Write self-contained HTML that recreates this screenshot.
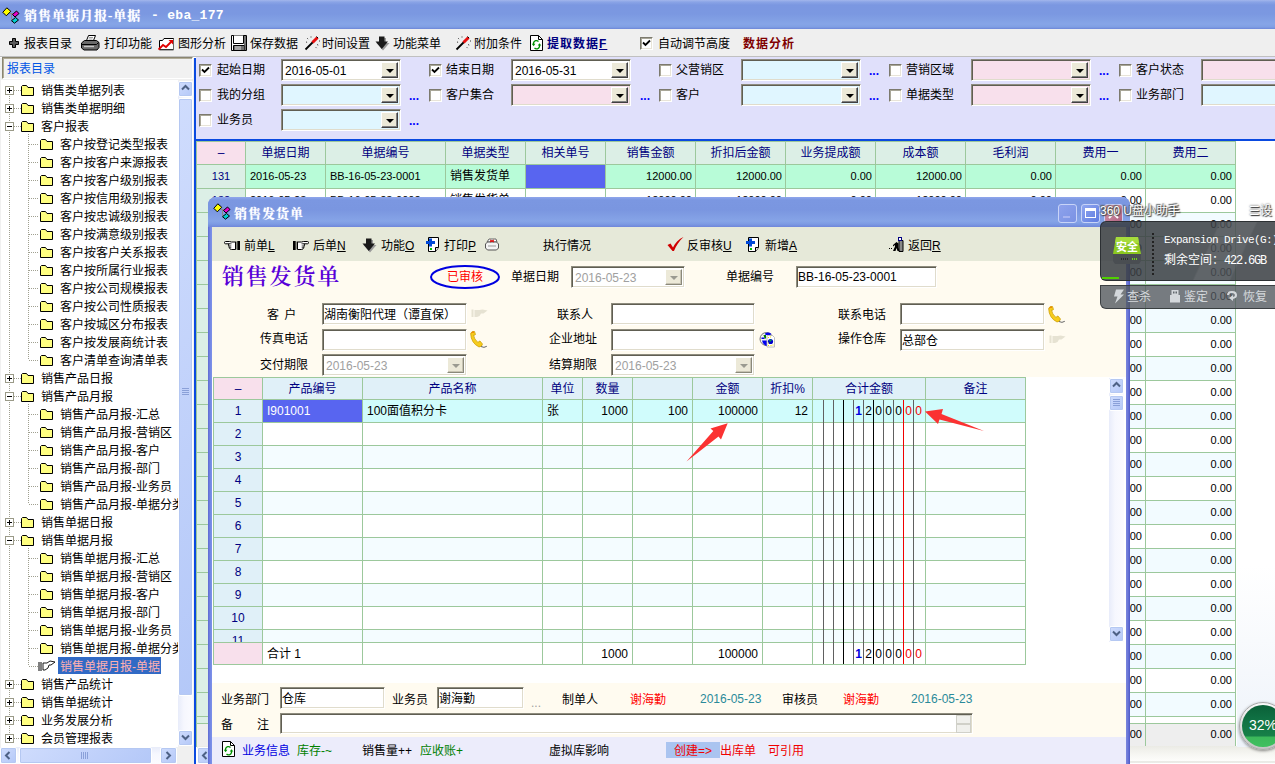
<!DOCTYPE html><html><head><meta charset="utf-8"><title>销售单据月报-单据</title><style>
*{box-sizing:border-box;margin:0;padding:0}
html,body{width:1275px;height:764px;overflow:hidden;background:#fff}
body{position:relative;font-family:"Liberation Sans","Noto Sans CJK SC",sans-serif;font-size:12px;color:#000;line-height:1}
.a{position:absolute}
.t{position:absolute;white-space:nowrap;line-height:14px;height:14px;font-size:12px}
.cb{position:absolute;width:13px;height:13px;background:#fff;border:1px solid #7c7a6e;border-right-color:#fff;border-bottom-color:#fff;box-shadow:inset 1px 1px 0 #a8a698, inset -1px -1px 0 #e8e4d8}
.combo{position:absolute;height:22px;border:1px solid #8e8c7e;border-right-color:#fff;border-bottom-color:#fff;box-shadow:inset 1px 1px 0 #605e52,inset -1px -1px 0 #e0dccc}
.combo .btn{position:absolute;right:2px;top:2px;bottom:2px;width:17px;background:#ece9d8;border:1px solid #fff;border-right-color:#404040;border-bottom-color:#404040;box-shadow:inset -1px -1px 0 #808080}
.combo .btn:after{content:"";position:absolute;left:4px;top:6px;border:4px solid transparent;border-top:4px solid #000;border-bottom:none}
.combo .btn.dis{border-right-color:#8a887a;border-bottom-color:#8a887a;box-shadow:inset -1px -1px 0 #c8c4b4}
.combo .btn.dis:after{border-top-color:#9a9a90}
.combo .v{position:absolute;left:3px;top:4px;font-size:12px;line-height:14px}
.inp{position:absolute;border:1px solid #8e8c7e;border-right-color:#fff;border-bottom-color:#fff;box-shadow:inset 1px 1px 0 #605e52,inset -1px -1px 0 #e0dccc;background:#fff}
.inp .v{position:absolute;left:1px;top:3px;font-size:12px;line-height:14px;white-space:nowrap}
.dots{position:absolute;color:#0000ff;font-weight:bold;font-size:12px;line-height:14px;letter-spacing:0px}
.gc{position:absolute;border-right:1px solid #9cc89c;border-bottom:1px solid #9cc89c;font-size:12px;line-height:14px;white-space:nowrap;overflow:hidden}
.sbb{position:absolute;background:linear-gradient(135deg,#cfdcfd,#b4c8f8);border:1px solid #fff;border-radius:2px;box-shadow:0 0 0 1px #b5c8f2 inset}
</style></head><body>
<div class="a" style="left:0px;top:0px;width:1275px;height:29px;background:linear-gradient(#a3b6ec 0,#8aa4e6 2px,#7b97e1 5px,#7b98e1 14px,#86a5e7 24px,#809fe4 27px,#6d86d8 29px)"></div>
<svg class="a" style="left:2px;top:7px" width="18" height="18" viewBox="0 0 18 18"><path d="M7.500 6.500h3.500M9.500 6.500v6h2" fill="none" stroke="#8a8a8a" stroke-width="1"/><path d="M4.800 0.800L8.800 4.300 4.300 8.800 0.800 5.300z" fill="#ffff00" stroke="#000" stroke-width="1"/><path d="M14.500 4L17 6.500 13 10 10.500 7.500z" fill="#e800c8" stroke="#000" stroke-width="1"/><path d="M13.500 10.500L16.500 13 12.500 16.200 9.500 13.700z" fill="#00d0d0" stroke="#000" stroke-width="1"/></svg>
<div class="t" style="left:24px;top:8px;color:#fff;font-family:'Liberation Serif','Noto Serif CJK SC',serif;font-weight:bold;font-size:13px;letter-spacing:1px;line-height:16px;height:16px;text-shadow:0 0 1px #dfe6ff">销售单据月报-单据</div>
<div class="t" style="left:151px;top:8px;color:#fff;font-weight:bold;font-size:13px;letter-spacing:0.3px;line-height:16px;height:16px;font-family:'Liberation Mono',monospace">- eba_177</div>
<div class="a" style="left:0px;top:29px;width:1275px;height:27px;background:#efefef"></div>
<div class="a" style="left:0px;top:56px;width:1275px;height:1px;background:#c0c0c0"></div>
<svg class="a" style="left:9px;top:38px" width="10" height="10" viewBox="0 0 10 10"><path d="M3.500 0.500h3v3h3v3h-3v3h-3v-3h-3v-3h3z" fill="#5a5a5a" stroke="#000" stroke-width="1"/></svg>
<div class="t" style="left:24px;top:37px;">报表目录</div>
<svg class="a" style="left:81px;top:35px" width="19" height="16" viewBox="0 0 19 16"><path d="M7.500 0.500h7l-2 5h-7z" fill="#fff" stroke="#000"/><path d="M8 2.500h4M7.500 4h4" stroke="#888" stroke-width="0.800"/><path d="M3.500 5.500h12l2.500 2v5l-2 2.500h-13l-2.500-2v-5z" fill="#6a6a6a" stroke="#000"/><path d="M1 9.500h14.500l2-2" fill="none" stroke="#000"/><path d="M3 11.500h10" stroke="#c8c8c8" stroke-width="1.400"/></svg>
<div class="t" style="left:104px;top:37px;">打印功能</div>
<svg class="a" style="left:158px;top:36px" width="17" height="15" viewBox="0 0 17 15"><path d="M1.500 4.500h3l1.500-2h9.500v11h-14z" fill="#fff" stroke="#000"/><path d="M15.500 3v11h-14" fill="none" stroke="#666" stroke-width="1"/><path d="M0.500 13.500l4.500-4.500 3 2 5-5" fill="none" stroke="#e00000" stroke-width="1.800"/><path d="M10.500 4h4.500v4.500z" fill="#e00000"/></svg>
<div class="t" style="left:178px;top:37px;">图形分析</div>
<svg class="a" style="left:231px;top:35px" width="16" height="16" viewBox="0 0 16 16"><path d="M0.500 0.500h15v15h-15z" fill="#fff" stroke="#000"/><path d="M2.500 0.500v8h10v-8" fill="#fff" stroke="#000"/><path d="M2.500 10.500h11v5h-11z" fill="#707070" stroke="#000"/><path d="M5 11v4M7 11v4M9 11v4" stroke="#ddd" stroke-width="1"/><path d="M14 1v14" stroke="#444" stroke-width="1.500"/></svg>
<div class="t" style="left:250px;top:37px;">保存数据</div>
<svg class="a" style="left:304px;top:35px" width="17" height="16" viewBox="0 0 17 16"><path d="M1.500 14.500l8-8" stroke="#000" stroke-width="1.800" fill="none"/><path d="M8.500 7.500l5-5" stroke="#e81010" stroke-width="3"/><path d="M12.500 1.500l1.500 1.500" stroke="#000" stroke-width="1"/><path d="M3 3l1.500 1.500M7 1.500v2M13 9.500l2 1M11.500 12l1.500 1.500M2 7l2 0.500M15 6l1 0" stroke="#303030" stroke-width="1" stroke-dasharray="1 1"/></svg>
<div class="t" style="left:322px;top:37px;">时间设置</div>
<svg class="a" style="left:375px;top:36px" width="15" height="15" viewBox="0 0 15 15"><path d="M5 2h6v5h3.500l-6.500 7.500-6.500-7.500h3.500z" fill="#9a9a9a"/><path d="M4 0.500h5.500v5h3.500l-6.200 7.500-6.300-7.500h3.500z" fill="#1a1a1a"/></svg>
<div class="t" style="left:393px;top:37px;">功能菜单</div>
<svg class="a" style="left:455px;top:35px" width="17" height="16" viewBox="0 0 17 16"><path d="M1.500 14.500l8-8" stroke="#000" stroke-width="1.800" fill="none"/><path d="M8.500 7.500l5-5" stroke="#e81010" stroke-width="3"/><path d="M12.500 1.500l1.500 1.500" stroke="#000" stroke-width="1"/><path d="M3 3l1.500 1.500M7 1.500v2M13 9.500l2 1M11.500 12l1.500 1.500M2 7l2 0.500M15 6l1 0" stroke="#303030" stroke-width="1" stroke-dasharray="1 1"/></svg>
<div class="t" style="left:474px;top:37px;">附加条件</div>
<svg class="a" style="left:529px;top:34px" width="15" height="18" viewBox="0 0 15 18"><path d="M1.500 1.500h8l4 4v11h-12z" fill="#fff" stroke="#000"/><path d="M9.500 1.500v4h4" fill="none" stroke="#000"/><path d="M9.500 7.500A3 3.200 0 0 0 4.500 9v1.500" fill="none" stroke="#009000" stroke-width="1.300"/><path d="M2.800 9.800h3.600l-1.800 2.400z" fill="#009000"/><path d="M5.500 14A3 3.200 0 0 0 10.500 12.500v-1.500" fill="none" stroke="#009000" stroke-width="1.300"/><path d="M8.700 11.600h3.600l-1.800-2.400z" fill="#009000"/></svg>
<div class="t" style="left:547px;top:37px;font-weight:bold;color:#000080;letter-spacing:1px">提取数据<u>F</u></div>
<div class="cb" style="left:640px;top:37px;width:13px;height:13px;"></div>
<svg class="a" style="left:642px;top:39px" width="9" height="9" viewBox="0 0 9 9"><path d="M1 3.500l2.500 2.500 4.500-4.500" fill="none" stroke="#000" stroke-width="1.800"/></svg>
<div class="t" style="left:658px;top:37px;">自动调节高度</div>
<div class="t" style="left:743px;top:37px;font-weight:bold;color:#800000;letter-spacing:1px">数据分析</div>
<div class="a" style="left:0px;top:58px;width:194px;height:706px;background:#f0f0f0"></div>
<div class="a" style="left:2px;top:57px;width:191px;height:22px;background:#f1f1f1;border:1px solid #8a8570;border-right-color:#fff;border-bottom-color:#fff;box-shadow:inset 1px 1px 0 #b0ab98"></div>
<div class="t" style="left:7px;top:62px;color:#0055e5">报表目录</div>
<div class="a" style="left:1px;top:80px;width:177px;height:667px;background:#fff"></div>
<div class="a" style="left:9px;top:94px;width:1px;height:643px;background-image:linear-gradient(#a0a090 50%,transparent 50%);background-size:1px 2px"></div>
<div class="a" style="left:28px;top:134px;width:1px;height:226px;background-image:linear-gradient(#a0a090 50%,transparent 50%);background-size:1px 2px"></div>
<div class="a" style="left:28px;top:404px;width:1px;height:100px;background-image:linear-gradient(#a0a090 50%,transparent 50%);background-size:1px 2px"></div>
<div class="a" style="left:28px;top:548px;width:1px;height:118px;background-image:linear-gradient(#a0a090 50%,transparent 50%);background-size:1px 2px"></div>
<div class="a" style="left:0;top:80px;width:178px;height:667px;overflow:hidden">
<div class="a" style="left:14px;top:10px;width:7px;height:1px;background-image:linear-gradient(90deg,#a0a090 50%,transparent 50%);background-size:2px 1px"></div>
<svg class="a" style="left:5px;top:6px" width="9" height="9" viewBox="0 0 9 9"><rect x="0.500" y="0.500" width="8" height="8" fill="#fff" stroke="#9a9a88"/><path d="M2 4.500h5M4.500 2v5" stroke="#000" stroke-width="1"/></svg>
<svg class="a" style="left:21px;top:4px" width="13" height="12" viewBox="0 0 13 12"><path d="M0.500 2.500v9h12v-8h-5.500l-1.500-2h-4z" fill="#ffff80" stroke="#000" stroke-width="1"/></svg>
<div class="t" style="left:41px;top:4px;">销售类单据列表</div>
<div class="a" style="left:14px;top:28px;width:7px;height:1px;background-image:linear-gradient(90deg,#a0a090 50%,transparent 50%);background-size:2px 1px"></div>
<svg class="a" style="left:5px;top:24px" width="9" height="9" viewBox="0 0 9 9"><rect x="0.500" y="0.500" width="8" height="8" fill="#fff" stroke="#9a9a88"/><path d="M2 4.500h5M4.500 2v5" stroke="#000" stroke-width="1"/></svg>
<svg class="a" style="left:21px;top:22px" width="13" height="12" viewBox="0 0 13 12"><path d="M0.500 2.500v9h12v-8h-5.500l-1.500-2h-4z" fill="#ffff80" stroke="#000" stroke-width="1"/></svg>
<div class="t" style="left:41px;top:22px;">销售类单据明细</div>
<div class="a" style="left:14px;top:46px;width:7px;height:1px;background-image:linear-gradient(90deg,#a0a090 50%,transparent 50%);background-size:2px 1px"></div>
<svg class="a" style="left:5px;top:42px" width="9" height="9" viewBox="0 0 9 9"><rect x="0.500" y="0.500" width="8" height="8" fill="#fff" stroke="#9a9a88"/><path d="M2 4.500h5" stroke="#000" stroke-width="1"/></svg>
<svg class="a" style="left:21px;top:40px" width="13" height="12" viewBox="0 0 13 12"><path d="M0.500 2.500v9h12v-8h-5.500l-1.500-2h-4z" fill="#ffff80" stroke="#000" stroke-width="1"/></svg>
<div class="t" style="left:41px;top:40px;">客户报表</div>
<div class="a" style="left:29px;top:64px;width:10px;height:1px;background-image:linear-gradient(90deg,#a0a090 50%,transparent 50%);background-size:2px 1px"></div>
<svg class="a" style="left:40px;top:58px" width="13" height="12" viewBox="0 0 13 12"><path d="M0.500 2.500v9h12v-8h-5.500l-1.500-2h-4z" fill="#ffff80" stroke="#000" stroke-width="1"/></svg>
<div class="t" style="left:60px;top:58px;">客户按登记类型报表</div>
<div class="a" style="left:29px;top:82px;width:10px;height:1px;background-image:linear-gradient(90deg,#a0a090 50%,transparent 50%);background-size:2px 1px"></div>
<svg class="a" style="left:40px;top:76px" width="13" height="12" viewBox="0 0 13 12"><path d="M0.500 2.500v9h12v-8h-5.500l-1.500-2h-4z" fill="#ffff80" stroke="#000" stroke-width="1"/></svg>
<div class="t" style="left:60px;top:76px;">客户按客户来源报表</div>
<div class="a" style="left:29px;top:100px;width:10px;height:1px;background-image:linear-gradient(90deg,#a0a090 50%,transparent 50%);background-size:2px 1px"></div>
<svg class="a" style="left:40px;top:94px" width="13" height="12" viewBox="0 0 13 12"><path d="M0.500 2.500v9h12v-8h-5.500l-1.500-2h-4z" fill="#ffff80" stroke="#000" stroke-width="1"/></svg>
<div class="t" style="left:60px;top:94px;">客户按客户级别报表</div>
<div class="a" style="left:29px;top:118px;width:10px;height:1px;background-image:linear-gradient(90deg,#a0a090 50%,transparent 50%);background-size:2px 1px"></div>
<svg class="a" style="left:40px;top:112px" width="13" height="12" viewBox="0 0 13 12"><path d="M0.500 2.500v9h12v-8h-5.500l-1.500-2h-4z" fill="#ffff80" stroke="#000" stroke-width="1"/></svg>
<div class="t" style="left:60px;top:112px;">客户按信用级别报表</div>
<div class="a" style="left:29px;top:136px;width:10px;height:1px;background-image:linear-gradient(90deg,#a0a090 50%,transparent 50%);background-size:2px 1px"></div>
<svg class="a" style="left:40px;top:130px" width="13" height="12" viewBox="0 0 13 12"><path d="M0.500 2.500v9h12v-8h-5.500l-1.500-2h-4z" fill="#ffff80" stroke="#000" stroke-width="1"/></svg>
<div class="t" style="left:60px;top:130px;">客户按忠诚级别报表</div>
<div class="a" style="left:29px;top:154px;width:10px;height:1px;background-image:linear-gradient(90deg,#a0a090 50%,transparent 50%);background-size:2px 1px"></div>
<svg class="a" style="left:40px;top:148px" width="13" height="12" viewBox="0 0 13 12"><path d="M0.500 2.500v9h12v-8h-5.500l-1.500-2h-4z" fill="#ffff80" stroke="#000" stroke-width="1"/></svg>
<div class="t" style="left:60px;top:148px;">客户按满意级别报表</div>
<div class="a" style="left:29px;top:172px;width:10px;height:1px;background-image:linear-gradient(90deg,#a0a090 50%,transparent 50%);background-size:2px 1px"></div>
<svg class="a" style="left:40px;top:166px" width="13" height="12" viewBox="0 0 13 12"><path d="M0.500 2.500v9h12v-8h-5.500l-1.500-2h-4z" fill="#ffff80" stroke="#000" stroke-width="1"/></svg>
<div class="t" style="left:60px;top:166px;">客户按客户关系报表</div>
<div class="a" style="left:29px;top:190px;width:10px;height:1px;background-image:linear-gradient(90deg,#a0a090 50%,transparent 50%);background-size:2px 1px"></div>
<svg class="a" style="left:40px;top:184px" width="13" height="12" viewBox="0 0 13 12"><path d="M0.500 2.500v9h12v-8h-5.500l-1.500-2h-4z" fill="#ffff80" stroke="#000" stroke-width="1"/></svg>
<div class="t" style="left:60px;top:184px;">客户按所属行业报表</div>
<div class="a" style="left:29px;top:208px;width:10px;height:1px;background-image:linear-gradient(90deg,#a0a090 50%,transparent 50%);background-size:2px 1px"></div>
<svg class="a" style="left:40px;top:202px" width="13" height="12" viewBox="0 0 13 12"><path d="M0.500 2.500v9h12v-8h-5.500l-1.500-2h-4z" fill="#ffff80" stroke="#000" stroke-width="1"/></svg>
<div class="t" style="left:60px;top:202px;">客户按公司规模报表</div>
<div class="a" style="left:29px;top:226px;width:10px;height:1px;background-image:linear-gradient(90deg,#a0a090 50%,transparent 50%);background-size:2px 1px"></div>
<svg class="a" style="left:40px;top:220px" width="13" height="12" viewBox="0 0 13 12"><path d="M0.500 2.500v9h12v-8h-5.500l-1.500-2h-4z" fill="#ffff80" stroke="#000" stroke-width="1"/></svg>
<div class="t" style="left:60px;top:220px;">客户按公司性质报表</div>
<div class="a" style="left:29px;top:244px;width:10px;height:1px;background-image:linear-gradient(90deg,#a0a090 50%,transparent 50%);background-size:2px 1px"></div>
<svg class="a" style="left:40px;top:238px" width="13" height="12" viewBox="0 0 13 12"><path d="M0.500 2.500v9h12v-8h-5.500l-1.500-2h-4z" fill="#ffff80" stroke="#000" stroke-width="1"/></svg>
<div class="t" style="left:60px;top:238px;">客户按城区分布报表</div>
<div class="a" style="left:29px;top:262px;width:10px;height:1px;background-image:linear-gradient(90deg,#a0a090 50%,transparent 50%);background-size:2px 1px"></div>
<svg class="a" style="left:40px;top:256px" width="13" height="12" viewBox="0 0 13 12"><path d="M0.500 2.500v9h12v-8h-5.500l-1.500-2h-4z" fill="#ffff80" stroke="#000" stroke-width="1"/></svg>
<div class="t" style="left:60px;top:256px;">客户按发展商统计表</div>
<div class="a" style="left:29px;top:280px;width:10px;height:1px;background-image:linear-gradient(90deg,#a0a090 50%,transparent 50%);background-size:2px 1px"></div>
<svg class="a" style="left:40px;top:274px" width="13" height="12" viewBox="0 0 13 12"><path d="M0.500 2.500v9h12v-8h-5.500l-1.500-2h-4z" fill="#ffff80" stroke="#000" stroke-width="1"/></svg>
<div class="t" style="left:60px;top:274px;">客户清单查询清单表</div>
<div class="a" style="left:14px;top:298px;width:7px;height:1px;background-image:linear-gradient(90deg,#a0a090 50%,transparent 50%);background-size:2px 1px"></div>
<svg class="a" style="left:5px;top:294px" width="9" height="9" viewBox="0 0 9 9"><rect x="0.500" y="0.500" width="8" height="8" fill="#fff" stroke="#9a9a88"/><path d="M2 4.500h5M4.500 2v5" stroke="#000" stroke-width="1"/></svg>
<svg class="a" style="left:21px;top:292px" width="13" height="12" viewBox="0 0 13 12"><path d="M0.500 2.500v9h12v-8h-5.500l-1.500-2h-4z" fill="#ffff80" stroke="#000" stroke-width="1"/></svg>
<div class="t" style="left:41px;top:292px;">销售产品日报</div>
<div class="a" style="left:14px;top:316px;width:7px;height:1px;background-image:linear-gradient(90deg,#a0a090 50%,transparent 50%);background-size:2px 1px"></div>
<svg class="a" style="left:5px;top:312px" width="9" height="9" viewBox="0 0 9 9"><rect x="0.500" y="0.500" width="8" height="8" fill="#fff" stroke="#9a9a88"/><path d="M2 4.500h5" stroke="#000" stroke-width="1"/></svg>
<svg class="a" style="left:21px;top:310px" width="13" height="12" viewBox="0 0 13 12"><path d="M0.500 2.500v9h12v-8h-5.500l-1.500-2h-4z" fill="#ffff80" stroke="#000" stroke-width="1"/></svg>
<div class="t" style="left:41px;top:310px;">销售产品月报</div>
<div class="a" style="left:29px;top:334px;width:10px;height:1px;background-image:linear-gradient(90deg,#a0a090 50%,transparent 50%);background-size:2px 1px"></div>
<svg class="a" style="left:40px;top:328px" width="13" height="12" viewBox="0 0 13 12"><path d="M0.500 2.500v9h12v-8h-5.500l-1.500-2h-4z" fill="#ffff80" stroke="#000" stroke-width="1"/></svg>
<div class="t" style="left:60px;top:328px;">销售产品月报-汇总</div>
<div class="a" style="left:29px;top:352px;width:10px;height:1px;background-image:linear-gradient(90deg,#a0a090 50%,transparent 50%);background-size:2px 1px"></div>
<svg class="a" style="left:40px;top:346px" width="13" height="12" viewBox="0 0 13 12"><path d="M0.500 2.500v9h12v-8h-5.500l-1.500-2h-4z" fill="#ffff80" stroke="#000" stroke-width="1"/></svg>
<div class="t" style="left:60px;top:346px;">销售产品月报-营销区</div>
<div class="a" style="left:29px;top:370px;width:10px;height:1px;background-image:linear-gradient(90deg,#a0a090 50%,transparent 50%);background-size:2px 1px"></div>
<svg class="a" style="left:40px;top:364px" width="13" height="12" viewBox="0 0 13 12"><path d="M0.500 2.500v9h12v-8h-5.500l-1.500-2h-4z" fill="#ffff80" stroke="#000" stroke-width="1"/></svg>
<div class="t" style="left:60px;top:364px;">销售产品月报-客户</div>
<div class="a" style="left:29px;top:388px;width:10px;height:1px;background-image:linear-gradient(90deg,#a0a090 50%,transparent 50%);background-size:2px 1px"></div>
<svg class="a" style="left:40px;top:382px" width="13" height="12" viewBox="0 0 13 12"><path d="M0.500 2.500v9h12v-8h-5.500l-1.500-2h-4z" fill="#ffff80" stroke="#000" stroke-width="1"/></svg>
<div class="t" style="left:60px;top:382px;">销售产品月报-部门</div>
<div class="a" style="left:29px;top:406px;width:10px;height:1px;background-image:linear-gradient(90deg,#a0a090 50%,transparent 50%);background-size:2px 1px"></div>
<svg class="a" style="left:40px;top:400px" width="13" height="12" viewBox="0 0 13 12"><path d="M0.500 2.500v9h12v-8h-5.500l-1.500-2h-4z" fill="#ffff80" stroke="#000" stroke-width="1"/></svg>
<div class="t" style="left:60px;top:400px;">销售产品月报-业务员</div>
<div class="a" style="left:29px;top:424px;width:10px;height:1px;background-image:linear-gradient(90deg,#a0a090 50%,transparent 50%);background-size:2px 1px"></div>
<svg class="a" style="left:40px;top:418px" width="13" height="12" viewBox="0 0 13 12"><path d="M0.500 2.500v9h12v-8h-5.500l-1.500-2h-4z" fill="#ffff80" stroke="#000" stroke-width="1"/></svg>
<div class="t" style="left:60px;top:418px;">销售产品月报-单据分类</div>
<div class="a" style="left:14px;top:442px;width:7px;height:1px;background-image:linear-gradient(90deg,#a0a090 50%,transparent 50%);background-size:2px 1px"></div>
<svg class="a" style="left:5px;top:438px" width="9" height="9" viewBox="0 0 9 9"><rect x="0.500" y="0.500" width="8" height="8" fill="#fff" stroke="#9a9a88"/><path d="M2 4.500h5M4.500 2v5" stroke="#000" stroke-width="1"/></svg>
<svg class="a" style="left:21px;top:436px" width="13" height="12" viewBox="0 0 13 12"><path d="M0.500 2.500v9h12v-8h-5.500l-1.500-2h-4z" fill="#ffff80" stroke="#000" stroke-width="1"/></svg>
<div class="t" style="left:41px;top:436px;">销售单据日报</div>
<div class="a" style="left:14px;top:460px;width:7px;height:1px;background-image:linear-gradient(90deg,#a0a090 50%,transparent 50%);background-size:2px 1px"></div>
<svg class="a" style="left:5px;top:456px" width="9" height="9" viewBox="0 0 9 9"><rect x="0.500" y="0.500" width="8" height="8" fill="#fff" stroke="#9a9a88"/><path d="M2 4.500h5" stroke="#000" stroke-width="1"/></svg>
<svg class="a" style="left:21px;top:454px" width="13" height="12" viewBox="0 0 13 12"><path d="M0.500 2.500v9h12v-8h-5.500l-1.500-2h-4z" fill="#ffff80" stroke="#000" stroke-width="1"/></svg>
<div class="t" style="left:41px;top:454px;">销售单据月报</div>
<div class="a" style="left:29px;top:478px;width:10px;height:1px;background-image:linear-gradient(90deg,#a0a090 50%,transparent 50%);background-size:2px 1px"></div>
<svg class="a" style="left:40px;top:472px" width="13" height="12" viewBox="0 0 13 12"><path d="M0.500 2.500v9h12v-8h-5.500l-1.500-2h-4z" fill="#ffff80" stroke="#000" stroke-width="1"/></svg>
<div class="t" style="left:60px;top:472px;">销售单据月报-汇总</div>
<div class="a" style="left:29px;top:496px;width:10px;height:1px;background-image:linear-gradient(90deg,#a0a090 50%,transparent 50%);background-size:2px 1px"></div>
<svg class="a" style="left:40px;top:490px" width="13" height="12" viewBox="0 0 13 12"><path d="M0.500 2.500v9h12v-8h-5.500l-1.500-2h-4z" fill="#ffff80" stroke="#000" stroke-width="1"/></svg>
<div class="t" style="left:60px;top:490px;">销售单据月报-营销区</div>
<div class="a" style="left:29px;top:514px;width:10px;height:1px;background-image:linear-gradient(90deg,#a0a090 50%,transparent 50%);background-size:2px 1px"></div>
<svg class="a" style="left:40px;top:508px" width="13" height="12" viewBox="0 0 13 12"><path d="M0.500 2.500v9h12v-8h-5.500l-1.500-2h-4z" fill="#ffff80" stroke="#000" stroke-width="1"/></svg>
<div class="t" style="left:60px;top:508px;">销售单据月报-客户</div>
<div class="a" style="left:29px;top:532px;width:10px;height:1px;background-image:linear-gradient(90deg,#a0a090 50%,transparent 50%);background-size:2px 1px"></div>
<svg class="a" style="left:40px;top:526px" width="13" height="12" viewBox="0 0 13 12"><path d="M0.500 2.500v9h12v-8h-5.500l-1.500-2h-4z" fill="#ffff80" stroke="#000" stroke-width="1"/></svg>
<div class="t" style="left:60px;top:526px;">销售单据月报-部门</div>
<div class="a" style="left:29px;top:550px;width:10px;height:1px;background-image:linear-gradient(90deg,#a0a090 50%,transparent 50%);background-size:2px 1px"></div>
<svg class="a" style="left:40px;top:544px" width="13" height="12" viewBox="0 0 13 12"><path d="M0.500 2.500v9h12v-8h-5.500l-1.500-2h-4z" fill="#ffff80" stroke="#000" stroke-width="1"/></svg>
<div class="t" style="left:60px;top:544px;">销售单据月报-业务员</div>
<div class="a" style="left:29px;top:568px;width:10px;height:1px;background-image:linear-gradient(90deg,#a0a090 50%,transparent 50%);background-size:2px 1px"></div>
<svg class="a" style="left:40px;top:562px" width="13" height="12" viewBox="0 0 13 12"><path d="M0.500 2.500v9h12v-8h-5.500l-1.500-2h-4z" fill="#ffff80" stroke="#000" stroke-width="1"/></svg>
<div class="t" style="left:60px;top:562px;">销售单据月报-单据分类</div>
<div class="a" style="left:29px;top:586px;width:10px;height:1px;background-image:linear-gradient(90deg,#a0a090 50%,transparent 50%);background-size:2px 1px"></div>
<svg class="a" style="left:38px;top:580px" width="18" height="12" viewBox="0 0 18 12"><path d="M1 2v9M3 2v9" stroke="#000" stroke-width="1"/><path d="M5 3h4l3-2 5 1-4 3h-2l-1 3-3 2H5z" fill="#fff" stroke="#000" stroke-width="0.900"/></svg>
<div class="a" style="left:58px;top:577px;width:103px;height:17px;background:#316ac5"></div>
<div class="t" style="left:60px;top:580px;color:#ffb0b0">销售单据月报-单据</div>
<div class="a" style="left:14px;top:604px;width:7px;height:1px;background-image:linear-gradient(90deg,#a0a090 50%,transparent 50%);background-size:2px 1px"></div>
<svg class="a" style="left:5px;top:600px" width="9" height="9" viewBox="0 0 9 9"><rect x="0.500" y="0.500" width="8" height="8" fill="#fff" stroke="#9a9a88"/><path d="M2 4.500h5M4.500 2v5" stroke="#000" stroke-width="1"/></svg>
<svg class="a" style="left:21px;top:598px" width="13" height="12" viewBox="0 0 13 12"><path d="M0.500 2.500v9h12v-8h-5.500l-1.500-2h-4z" fill="#ffff80" stroke="#000" stroke-width="1"/></svg>
<div class="t" style="left:41px;top:598px;">销售产品统计</div>
<div class="a" style="left:14px;top:622px;width:7px;height:1px;background-image:linear-gradient(90deg,#a0a090 50%,transparent 50%);background-size:2px 1px"></div>
<svg class="a" style="left:5px;top:618px" width="9" height="9" viewBox="0 0 9 9"><rect x="0.500" y="0.500" width="8" height="8" fill="#fff" stroke="#9a9a88"/><path d="M2 4.500h5M4.500 2v5" stroke="#000" stroke-width="1"/></svg>
<svg class="a" style="left:21px;top:616px" width="13" height="12" viewBox="0 0 13 12"><path d="M0.500 2.500v9h12v-8h-5.500l-1.500-2h-4z" fill="#ffff80" stroke="#000" stroke-width="1"/></svg>
<div class="t" style="left:41px;top:616px;">销售单据统计</div>
<div class="a" style="left:14px;top:640px;width:7px;height:1px;background-image:linear-gradient(90deg,#a0a090 50%,transparent 50%);background-size:2px 1px"></div>
<svg class="a" style="left:5px;top:636px" width="9" height="9" viewBox="0 0 9 9"><rect x="0.500" y="0.500" width="8" height="8" fill="#fff" stroke="#9a9a88"/><path d="M2 4.500h5M4.500 2v5" stroke="#000" stroke-width="1"/></svg>
<svg class="a" style="left:21px;top:634px" width="13" height="12" viewBox="0 0 13 12"><path d="M0.500 2.500v9h12v-8h-5.500l-1.500-2h-4z" fill="#ffff80" stroke="#000" stroke-width="1"/></svg>
<div class="t" style="left:41px;top:634px;">业务发展分析</div>
<div class="a" style="left:14px;top:658px;width:7px;height:1px;background-image:linear-gradient(90deg,#a0a090 50%,transparent 50%);background-size:2px 1px"></div>
<svg class="a" style="left:5px;top:654px" width="9" height="9" viewBox="0 0 9 9"><rect x="0.500" y="0.500" width="8" height="8" fill="#fff" stroke="#9a9a88"/><path d="M2 4.500h5M4.500 2v5" stroke="#000" stroke-width="1"/></svg>
<svg class="a" style="left:21px;top:652px" width="13" height="12" viewBox="0 0 13 12"><path d="M0.500 2.500v9h12v-8h-5.500l-1.500-2h-4z" fill="#ffff80" stroke="#000" stroke-width="1"/></svg>
<div class="t" style="left:41px;top:652px;">会员管理报表</div>
</div>
<div class="a" style="left:178px;top:81px;width:15px;height:665px;background:linear-gradient(90deg,#e8ecfa,#f6f7fe 40%,#fbfbff)"></div>
<div class="sbb" style="left:178px;top:81px;width:15px;height:16px;"></div>
<svg class="a" style="left:181px;top:84px" width="9" height="9" viewBox="0 0 9 9"><path d="M1 5.500l3.500-3.500 3.500 3.500" fill="none" stroke="#4d6185" stroke-width="2"/></svg>
<div class="sbb" style="left:178px;top:730px;width:15px;height:16px;"></div>
<svg class="a" style="left:181px;top:734px" width="9" height="9" viewBox="0 0 9 9"><path d="M1 1.500l3.500 3.500 3.500-3.500" fill="none" stroke="#4d6185" stroke-width="2"/></svg>
<div class="sbb" style="left:178px;top:98px;width:15px;height:598px;"></div>
<div class="a" style="left:0px;top:747px;width:177px;height:17px;background:linear-gradient(#e8ecfa,#f6f7fe 40%,#fbfbff)"></div>
<div class="sbb" style="left:0px;top:747px;width:17px;height:17px;"></div>
<svg class="a" style="left:4px;top:751px" width="9" height="9" viewBox="0 0 9 9"><path d="M5.500 1l-3.500 3.500 3.500 3.500" fill="none" stroke="#4d6185" stroke-width="2"/></svg>
<div class="sbb" style="left:160px;top:747px;width:17px;height:17px;"></div>
<svg class="a" style="left:164px;top:751px" width="9" height="9" viewBox="0 0 9 9"><path d="M2.500 1l3.500 3.500-3.500 3.500" fill="none" stroke="#4d6185" stroke-width="2"/></svg>
<div class="sbb" style="left:19px;top:747px;width:133px;height:17px;"></div>
<div class="a" style="left:81px;top:752px;width:1px;height:7px;background:#8aa0d8"></div>
<div class="a" style="left:83px;top:752px;width:1px;height:7px;background:#8aa0d8"></div>
<div class="a" style="left:85px;top:752px;width:1px;height:7px;background:#8aa0d8"></div>
<div class="a" style="left:87px;top:752px;width:1px;height:7px;background:#8aa0d8"></div>
<div class="a" style="left:182px;top:388px;width:7px;height:1px;background:#8aa0d8"></div>
<div class="a" style="left:182px;top:390px;width:7px;height:1px;background:#8aa0d8"></div>
<div class="a" style="left:182px;top:392px;width:7px;height:1px;background:#8aa0d8"></div>
<div class="a" style="left:182px;top:394px;width:7px;height:1px;background:#8aa0d8"></div>
<div class="a" style="left:194px;top:58px;width:2px;height:706px;background:#0a4ae0"></div>
<div class="a" style="left:196px;top:57px;width:1079px;height:82px;background:#e0e0fb"></div>
<div class="a" style="left:196px;top:139px;width:1079px;height:2px;background:#0a4ae0"></div>
<div class="cb" style="left:199px;top:64px;width:13px;height:13px;"></div>
<svg class="a" style="left:201px;top:66px" width="9" height="9" viewBox="0 0 9 9"><path d="M1 3.500l2.500 2.500 4.500-4.500" fill="none" stroke="#000" stroke-width="1.800"/></svg>
<div class="t" style="left:217px;top:63px;">起始日期</div>
<div class="combo" style="left:281px;top:59px;width:120px;background:#fff"><div class="v" style="color:#000">2016-05-01</div><div class="btn"></div></div>
<div class="cb" style="left:429px;top:64px;width:13px;height:13px;"></div>
<svg class="a" style="left:431px;top:66px" width="9" height="9" viewBox="0 0 9 9"><path d="M1 3.500l2.500 2.500 4.500-4.500" fill="none" stroke="#000" stroke-width="1.800"/></svg>
<div class="t" style="left:446px;top:63px;">结束日期</div>
<div class="combo" style="left:511px;top:59px;width:120px;background:#fff"><div class="v" style="color:#000">2016-05-31</div><div class="btn"></div></div>
<div class="cb" style="left:659px;top:64px;width:13px;height:13px;"></div>
<div class="t" style="left:676px;top:63px;">父营销区</div>
<div class="combo" style="left:741px;top:59px;width:120px;background:#e0f6ff"><div class="v" style="color:#000"></div><div class="btn"></div></div>
<div class="dots" style="left:869px;top:64px;">...</div>
<div class="cb" style="left:889px;top:64px;width:13px;height:13px;"></div>
<div class="t" style="left:906px;top:63px;">营销区域</div>
<div class="combo" style="left:971px;top:59px;width:120px;background:#f8e0ec"><div class="v" style="color:#000"></div><div class="btn"></div></div>
<div class="dots" style="left:1099px;top:64px;">...</div>
<div class="cb" style="left:1119px;top:64px;width:13px;height:13px;"></div>
<div class="t" style="left:1136px;top:63px;">客户状态</div>
<div class="combo" style="left:1201px;top:59px;width:120px;background:#f8e0ec"><div class="v" style="color:#000"></div><div class="btn"></div></div>
<div class="dots" style="left:1330px;top:64px;">...</div>
<div class="cb" style="left:199px;top:89px;width:13px;height:13px;"></div>
<div class="t" style="left:217px;top:88px;">我的分组</div>
<div class="combo" style="left:281px;top:84px;width:120px;background:#e0f6ff"><div class="v" style="color:#000"></div><div class="btn"></div></div>
<div class="dots" style="left:409px;top:89px;">...</div>
<div class="cb" style="left:429px;top:89px;width:13px;height:13px;"></div>
<div class="t" style="left:446px;top:88px;">客户集合</div>
<div class="combo" style="left:511px;top:84px;width:120px;background:#f8e0ec"><div class="v" style="color:#000"></div><div class="btn"></div></div>
<div class="dots" style="left:640px;top:89px;">...</div>
<div class="cb" style="left:659px;top:89px;width:13px;height:13px;"></div>
<div class="t" style="left:676px;top:88px;">客户</div>
<div class="combo" style="left:741px;top:84px;width:120px;background:#e0f6ff"><div class="v" style="color:#000"></div><div class="btn"></div></div>
<div class="dots" style="left:869px;top:89px;">...</div>
<div class="cb" style="left:889px;top:89px;width:13px;height:13px;"></div>
<div class="t" style="left:906px;top:88px;">单据类型</div>
<div class="combo" style="left:971px;top:84px;width:120px;background:#f8e0ec"><div class="v" style="color:#000"></div><div class="btn"></div></div>
<div class="dots" style="left:1099px;top:89px;">...</div>
<div class="cb" style="left:1119px;top:89px;width:13px;height:13px;"></div>
<div class="t" style="left:1136px;top:88px;">业务部门</div>
<div class="combo" style="left:1201px;top:84px;width:120px;background:#e0f6ff"><div class="v" style="color:#000"></div><div class="btn"></div></div>
<div class="dots" style="left:1330px;top:89px;">...</div>
<div class="cb" style="left:199px;top:114px;width:13px;height:13px;"></div>
<div class="t" style="left:217px;top:113px;">业务员</div>
<div class="combo" style="left:281px;top:109px;width:120px;background:#e0f6ff"><div class="v" style="color:#000"></div><div class="btn"></div></div>
<div class="dots" style="left:409px;top:114px;">...</div>
<div class="a" style="left:196px;top:141px;width:1040px;height:606px;background:#fff;border-left:1px solid #9cc89c;border-top:1px solid #9cc89c"></div>
<div class="gc" style="left:197px;top:142px;width:49px;height:23px;background:#f8e0ec;text-align:center;color:#000080;padding-top:4px;">–</div>
<div class="gc" style="left:246px;top:142px;width:80px;height:23px;background:#dcefe6;text-align:center;color:#000080;padding-top:4px;">单据日期</div>
<div class="gc" style="left:326px;top:142px;width:120px;height:23px;background:#dcefe6;text-align:center;color:#000080;padding-top:4px;">单据编号</div>
<div class="gc" style="left:446px;top:142px;width:80px;height:23px;background:#dcefe6;text-align:center;color:#000080;padding-top:4px;">单据类型</div>
<div class="gc" style="left:526px;top:142px;width:80px;height:23px;background:#dcefe6;text-align:center;color:#000080;padding-top:4px;">相关单号</div>
<div class="gc" style="left:606px;top:142px;width:90px;height:23px;background:#dcefe6;text-align:center;color:#000080;padding-top:4px;">销售金额</div>
<div class="gc" style="left:696px;top:142px;width:90px;height:23px;background:#dcefe6;text-align:center;color:#000080;padding-top:4px;">折扣后金额</div>
<div class="gc" style="left:786px;top:142px;width:90px;height:23px;background:#dcefe6;text-align:center;color:#000080;padding-top:4px;">业务提成额</div>
<div class="gc" style="left:876px;top:142px;width:90px;height:23px;background:#dcefe6;text-align:center;color:#000080;padding-top:4px;">成本额</div>
<div class="gc" style="left:966px;top:142px;width:90px;height:23px;background:#dcefe6;text-align:center;color:#000080;padding-top:4px;">毛利润</div>
<div class="gc" style="left:1056px;top:142px;width:90px;height:23px;background:#dcefe6;text-align:center;color:#000080;padding-top:4px;">费用一</div>
<div class="gc" style="left:1146px;top:142px;width:90px;height:23px;background:#dcefe6;text-align:center;color:#000080;padding-top:4px;">费用二</div>
<div class="gc" style="left:197px;top:165px;width:49px;height:24px;background:#dcefe6;text-align:center;color:#000080;padding-top:4px;font-size:11px;">131</div>
<div class="gc" style="left:246px;top:165px;width:80px;height:24px;background:#b8fcd8;text-align:left;color:#000;padding:0 4px;padding-top:4px;font-size:11px;">2016-05-23</div>
<div class="gc" style="left:326px;top:165px;width:120px;height:24px;background:#b8fcd8;text-align:left;color:#000;padding:0 4px;padding-top:4px;font-size:11px;">BB-16-05-23-0001</div>
<div class="gc" style="left:446px;top:165px;width:80px;height:24px;background:#b8fcd8;text-align:left;color:#000;padding:0 4px;padding-top:4px;">销售发货单</div>
<div class="gc" style="left:526px;top:165px;width:80px;height:24px;background:#5865f0;text-align:left;color:#000;padding:0 4px;padding-top:4px;font-size:11px;"></div>
<div class="gc" style="left:606px;top:165px;width:90px;height:24px;background:#b8fcd8;text-align:right;color:#000;padding:0 4px;padding-top:4px;padding-right:3px;font-size:11px;">12000.00</div>
<div class="gc" style="left:696px;top:165px;width:90px;height:24px;background:#b8fcd8;text-align:right;color:#000;padding:0 4px;padding-top:4px;padding-right:3px;font-size:11px;">12000.00</div>
<div class="gc" style="left:786px;top:165px;width:90px;height:24px;background:#b8fcd8;text-align:right;color:#000;padding:0 4px;padding-top:4px;padding-right:3px;font-size:11px;">0.00</div>
<div class="gc" style="left:876px;top:165px;width:90px;height:24px;background:#b8fcd8;text-align:right;color:#000;padding:0 4px;padding-top:4px;padding-right:3px;font-size:11px;">12000.00</div>
<div class="gc" style="left:966px;top:165px;width:90px;height:24px;background:#b8fcd8;text-align:right;color:#000;padding:0 4px;padding-top:4px;padding-right:3px;font-size:11px;">0.00</div>
<div class="gc" style="left:1056px;top:165px;width:90px;height:24px;background:#b8fcd8;text-align:right;color:#000;padding:0 4px;padding-top:4px;padding-right:3px;font-size:11px;">0.00</div>
<div class="gc" style="left:1146px;top:165px;width:90px;height:24px;background:#b8fcd8;text-align:right;color:#000;padding:0 4px;padding-top:4px;padding-right:3px;font-size:11px;">0.00</div>
<div class="gc" style="left:197px;top:189px;width:49px;height:24px;background:#dcefe6;text-align:center;color:#000080;padding-top:4px;font-size:11px;">132</div>
<div class="gc" style="left:246px;top:189px;width:80px;height:24px;background:#fff;text-align:left;color:#000;padding:0 4px;padding-top:4px;font-size:11px;">2016-05-23</div>
<div class="gc" style="left:326px;top:189px;width:120px;height:24px;background:#fff;text-align:left;color:#000;padding:0 4px;padding-top:4px;font-size:11px;">BB-16-05-23-0002</div>
<div class="gc" style="left:446px;top:189px;width:80px;height:24px;background:#fff;text-align:left;color:#000;padding:0 4px;padding-top:4px;">销售发货单</div>
<div class="gc" style="left:526px;top:189px;width:80px;height:24px;background:#fff;text-align:left;color:#000;padding:0 4px;padding-top:4px;font-size:11px;"></div>
<div class="gc" style="left:606px;top:189px;width:90px;height:24px;background:#fff;text-align:right;color:#000;padding:0 4px;padding-top:4px;padding-right:3px;font-size:11px;">12000.00</div>
<div class="gc" style="left:696px;top:189px;width:90px;height:24px;background:#fff;text-align:right;color:#000;padding:0 4px;padding-top:4px;padding-right:3px;font-size:11px;">12000.00</div>
<div class="gc" style="left:786px;top:189px;width:90px;height:24px;background:#fff;text-align:right;color:#000;padding:0 4px;padding-top:4px;padding-right:3px;font-size:11px;">0.00</div>
<div class="gc" style="left:876px;top:189px;width:90px;height:24px;background:#fff;text-align:right;color:#000;padding:0 4px;padding-top:4px;padding-right:3px;font-size:11px;">12000.00</div>
<div class="gc" style="left:966px;top:189px;width:90px;height:24px;background:#fff;text-align:right;color:#000;padding:0 4px;padding-top:4px;padding-right:3px;font-size:11px;">0.00</div>
<div class="gc" style="left:1056px;top:189px;width:90px;height:24px;background:#fff;text-align:right;color:#000;padding:0 4px;padding-top:4px;padding-right:3px;font-size:11px;">0.00</div>
<div class="gc" style="left:1146px;top:189px;width:90px;height:24px;background:#fff;text-align:right;color:#000;padding:0 4px;padding-top:4px;padding-right:3px;font-size:11px;">0.00</div>
<div class="gc" style="left:197px;top:213px;width:49px;height:24px;background:#dcefe6;text-align:center;color:#000080;padding-top:4px;font-size:11px;">133</div>
<div class="gc" style="left:246px;top:213px;width:80px;height:24px;background:#f2fbff;text-align:left;color:#000;padding:0 4px;padding-top:4px;font-size:11px;"></div>
<div class="gc" style="left:326px;top:213px;width:120px;height:24px;background:#f2fbff;text-align:left;color:#000;padding:0 4px;padding-top:4px;font-size:11px;"></div>
<div class="gc" style="left:446px;top:213px;width:80px;height:24px;background:#f2fbff;text-align:left;color:#000;padding:0 4px;padding-top:4px;"></div>
<div class="gc" style="left:526px;top:213px;width:80px;height:24px;background:#f2fbff;text-align:left;color:#000;padding:0 4px;padding-top:4px;font-size:11px;"></div>
<div class="gc" style="left:606px;top:213px;width:90px;height:24px;background:#f2fbff;text-align:right;color:#000;padding:0 4px;padding-top:4px;padding-right:3px;font-size:11px;"></div>
<div class="gc" style="left:696px;top:213px;width:90px;height:24px;background:#f2fbff;text-align:right;color:#000;padding:0 4px;padding-top:4px;padding-right:3px;font-size:11px;"></div>
<div class="gc" style="left:786px;top:213px;width:90px;height:24px;background:#f2fbff;text-align:right;color:#000;padding:0 4px;padding-top:4px;padding-right:3px;font-size:11px;"></div>
<div class="gc" style="left:876px;top:213px;width:90px;height:24px;background:#f2fbff;text-align:right;color:#000;padding:0 4px;padding-top:4px;padding-right:3px;font-size:11px;"></div>
<div class="gc" style="left:966px;top:213px;width:90px;height:24px;background:#f2fbff;text-align:right;color:#000;padding:0 4px;padding-top:4px;padding-right:3px;font-size:11px;"></div>
<div class="gc" style="left:1056px;top:213px;width:90px;height:24px;background:#f2fbff;text-align:right;color:#000;padding:0 4px;padding-top:4px;padding-right:3px;font-size:11px;">0.00</div>
<div class="gc" style="left:1146px;top:213px;width:90px;height:24px;background:#f2fbff;text-align:right;color:#000;padding:0 4px;padding-top:4px;padding-right:3px;font-size:11px;">0.00</div>
<div class="gc" style="left:197px;top:237px;width:49px;height:24px;background:#dcefe6;text-align:center;color:#000080;padding-top:4px;font-size:11px;">134</div>
<div class="gc" style="left:246px;top:237px;width:80px;height:24px;background:#fff;text-align:left;color:#000;padding:0 4px;padding-top:4px;font-size:11px;"></div>
<div class="gc" style="left:326px;top:237px;width:120px;height:24px;background:#fff;text-align:left;color:#000;padding:0 4px;padding-top:4px;font-size:11px;"></div>
<div class="gc" style="left:446px;top:237px;width:80px;height:24px;background:#fff;text-align:left;color:#000;padding:0 4px;padding-top:4px;"></div>
<div class="gc" style="left:526px;top:237px;width:80px;height:24px;background:#fff;text-align:left;color:#000;padding:0 4px;padding-top:4px;font-size:11px;"></div>
<div class="gc" style="left:606px;top:237px;width:90px;height:24px;background:#fff;text-align:right;color:#000;padding:0 4px;padding-top:4px;padding-right:3px;font-size:11px;"></div>
<div class="gc" style="left:696px;top:237px;width:90px;height:24px;background:#fff;text-align:right;color:#000;padding:0 4px;padding-top:4px;padding-right:3px;font-size:11px;"></div>
<div class="gc" style="left:786px;top:237px;width:90px;height:24px;background:#fff;text-align:right;color:#000;padding:0 4px;padding-top:4px;padding-right:3px;font-size:11px;"></div>
<div class="gc" style="left:876px;top:237px;width:90px;height:24px;background:#fff;text-align:right;color:#000;padding:0 4px;padding-top:4px;padding-right:3px;font-size:11px;"></div>
<div class="gc" style="left:966px;top:237px;width:90px;height:24px;background:#fff;text-align:right;color:#000;padding:0 4px;padding-top:4px;padding-right:3px;font-size:11px;"></div>
<div class="gc" style="left:1056px;top:237px;width:90px;height:24px;background:#fff;text-align:right;color:#000;padding:0 4px;padding-top:4px;padding-right:3px;font-size:11px;">0.00</div>
<div class="gc" style="left:1146px;top:237px;width:90px;height:24px;background:#fff;text-align:right;color:#000;padding:0 4px;padding-top:4px;padding-right:3px;font-size:11px;">0.00</div>
<div class="gc" style="left:197px;top:261px;width:49px;height:24px;background:#dcefe6;text-align:center;color:#000080;padding-top:4px;font-size:11px;">135</div>
<div class="gc" style="left:246px;top:261px;width:80px;height:24px;background:#f2fbff;text-align:left;color:#000;padding:0 4px;padding-top:4px;font-size:11px;"></div>
<div class="gc" style="left:326px;top:261px;width:120px;height:24px;background:#f2fbff;text-align:left;color:#000;padding:0 4px;padding-top:4px;font-size:11px;"></div>
<div class="gc" style="left:446px;top:261px;width:80px;height:24px;background:#f2fbff;text-align:left;color:#000;padding:0 4px;padding-top:4px;"></div>
<div class="gc" style="left:526px;top:261px;width:80px;height:24px;background:#f2fbff;text-align:left;color:#000;padding:0 4px;padding-top:4px;font-size:11px;"></div>
<div class="gc" style="left:606px;top:261px;width:90px;height:24px;background:#f2fbff;text-align:right;color:#000;padding:0 4px;padding-top:4px;padding-right:3px;font-size:11px;"></div>
<div class="gc" style="left:696px;top:261px;width:90px;height:24px;background:#f2fbff;text-align:right;color:#000;padding:0 4px;padding-top:4px;padding-right:3px;font-size:11px;"></div>
<div class="gc" style="left:786px;top:261px;width:90px;height:24px;background:#f2fbff;text-align:right;color:#000;padding:0 4px;padding-top:4px;padding-right:3px;font-size:11px;"></div>
<div class="gc" style="left:876px;top:261px;width:90px;height:24px;background:#f2fbff;text-align:right;color:#000;padding:0 4px;padding-top:4px;padding-right:3px;font-size:11px;"></div>
<div class="gc" style="left:966px;top:261px;width:90px;height:24px;background:#f2fbff;text-align:right;color:#000;padding:0 4px;padding-top:4px;padding-right:3px;font-size:11px;"></div>
<div class="gc" style="left:1056px;top:261px;width:90px;height:24px;background:#f2fbff;text-align:right;color:#000;padding:0 4px;padding-top:4px;padding-right:3px;font-size:11px;">0.00</div>
<div class="gc" style="left:1146px;top:261px;width:90px;height:24px;background:#f2fbff;text-align:right;color:#000;padding:0 4px;padding-top:4px;padding-right:3px;font-size:11px;">0.00</div>
<div class="gc" style="left:197px;top:285px;width:49px;height:24px;background:#dcefe6;text-align:center;color:#000080;padding-top:4px;font-size:11px;">136</div>
<div class="gc" style="left:246px;top:285px;width:80px;height:24px;background:#fff;text-align:left;color:#000;padding:0 4px;padding-top:4px;font-size:11px;"></div>
<div class="gc" style="left:326px;top:285px;width:120px;height:24px;background:#fff;text-align:left;color:#000;padding:0 4px;padding-top:4px;font-size:11px;"></div>
<div class="gc" style="left:446px;top:285px;width:80px;height:24px;background:#fff;text-align:left;color:#000;padding:0 4px;padding-top:4px;"></div>
<div class="gc" style="left:526px;top:285px;width:80px;height:24px;background:#fff;text-align:left;color:#000;padding:0 4px;padding-top:4px;font-size:11px;"></div>
<div class="gc" style="left:606px;top:285px;width:90px;height:24px;background:#fff;text-align:right;color:#000;padding:0 4px;padding-top:4px;padding-right:3px;font-size:11px;"></div>
<div class="gc" style="left:696px;top:285px;width:90px;height:24px;background:#fff;text-align:right;color:#000;padding:0 4px;padding-top:4px;padding-right:3px;font-size:11px;"></div>
<div class="gc" style="left:786px;top:285px;width:90px;height:24px;background:#fff;text-align:right;color:#000;padding:0 4px;padding-top:4px;padding-right:3px;font-size:11px;"></div>
<div class="gc" style="left:876px;top:285px;width:90px;height:24px;background:#fff;text-align:right;color:#000;padding:0 4px;padding-top:4px;padding-right:3px;font-size:11px;"></div>
<div class="gc" style="left:966px;top:285px;width:90px;height:24px;background:#fff;text-align:right;color:#000;padding:0 4px;padding-top:4px;padding-right:3px;font-size:11px;"></div>
<div class="gc" style="left:1056px;top:285px;width:90px;height:24px;background:#fff;text-align:right;color:#000;padding:0 4px;padding-top:4px;padding-right:3px;font-size:11px;">0.00</div>
<div class="gc" style="left:1146px;top:285px;width:90px;height:24px;background:#fff;text-align:right;color:#000;padding:0 4px;padding-top:4px;padding-right:3px;font-size:11px;">0.00</div>
<div class="gc" style="left:197px;top:309px;width:49px;height:24px;background:#dcefe6;text-align:center;color:#000080;padding-top:4px;font-size:11px;">137</div>
<div class="gc" style="left:246px;top:309px;width:80px;height:24px;background:#f2fbff;text-align:left;color:#000;padding:0 4px;padding-top:4px;font-size:11px;"></div>
<div class="gc" style="left:326px;top:309px;width:120px;height:24px;background:#f2fbff;text-align:left;color:#000;padding:0 4px;padding-top:4px;font-size:11px;"></div>
<div class="gc" style="left:446px;top:309px;width:80px;height:24px;background:#f2fbff;text-align:left;color:#000;padding:0 4px;padding-top:4px;"></div>
<div class="gc" style="left:526px;top:309px;width:80px;height:24px;background:#f2fbff;text-align:left;color:#000;padding:0 4px;padding-top:4px;font-size:11px;"></div>
<div class="gc" style="left:606px;top:309px;width:90px;height:24px;background:#f2fbff;text-align:right;color:#000;padding:0 4px;padding-top:4px;padding-right:3px;font-size:11px;"></div>
<div class="gc" style="left:696px;top:309px;width:90px;height:24px;background:#f2fbff;text-align:right;color:#000;padding:0 4px;padding-top:4px;padding-right:3px;font-size:11px;"></div>
<div class="gc" style="left:786px;top:309px;width:90px;height:24px;background:#f2fbff;text-align:right;color:#000;padding:0 4px;padding-top:4px;padding-right:3px;font-size:11px;"></div>
<div class="gc" style="left:876px;top:309px;width:90px;height:24px;background:#f2fbff;text-align:right;color:#000;padding:0 4px;padding-top:4px;padding-right:3px;font-size:11px;"></div>
<div class="gc" style="left:966px;top:309px;width:90px;height:24px;background:#f2fbff;text-align:right;color:#000;padding:0 4px;padding-top:4px;padding-right:3px;font-size:11px;"></div>
<div class="gc" style="left:1056px;top:309px;width:90px;height:24px;background:#f2fbff;text-align:right;color:#000;padding:0 4px;padding-top:4px;padding-right:3px;font-size:11px;">0.00</div>
<div class="gc" style="left:1146px;top:309px;width:90px;height:24px;background:#f2fbff;text-align:right;color:#000;padding:0 4px;padding-top:4px;padding-right:3px;font-size:11px;">0.00</div>
<div class="gc" style="left:197px;top:333px;width:49px;height:24px;background:#dcefe6;text-align:center;color:#000080;padding-top:4px;font-size:11px;">138</div>
<div class="gc" style="left:246px;top:333px;width:80px;height:24px;background:#fff;text-align:left;color:#000;padding:0 4px;padding-top:4px;font-size:11px;"></div>
<div class="gc" style="left:326px;top:333px;width:120px;height:24px;background:#fff;text-align:left;color:#000;padding:0 4px;padding-top:4px;font-size:11px;"></div>
<div class="gc" style="left:446px;top:333px;width:80px;height:24px;background:#fff;text-align:left;color:#000;padding:0 4px;padding-top:4px;"></div>
<div class="gc" style="left:526px;top:333px;width:80px;height:24px;background:#fff;text-align:left;color:#000;padding:0 4px;padding-top:4px;font-size:11px;"></div>
<div class="gc" style="left:606px;top:333px;width:90px;height:24px;background:#fff;text-align:right;color:#000;padding:0 4px;padding-top:4px;padding-right:3px;font-size:11px;"></div>
<div class="gc" style="left:696px;top:333px;width:90px;height:24px;background:#fff;text-align:right;color:#000;padding:0 4px;padding-top:4px;padding-right:3px;font-size:11px;"></div>
<div class="gc" style="left:786px;top:333px;width:90px;height:24px;background:#fff;text-align:right;color:#000;padding:0 4px;padding-top:4px;padding-right:3px;font-size:11px;"></div>
<div class="gc" style="left:876px;top:333px;width:90px;height:24px;background:#fff;text-align:right;color:#000;padding:0 4px;padding-top:4px;padding-right:3px;font-size:11px;"></div>
<div class="gc" style="left:966px;top:333px;width:90px;height:24px;background:#fff;text-align:right;color:#000;padding:0 4px;padding-top:4px;padding-right:3px;font-size:11px;"></div>
<div class="gc" style="left:1056px;top:333px;width:90px;height:24px;background:#fff;text-align:right;color:#000;padding:0 4px;padding-top:4px;padding-right:3px;font-size:11px;">0.00</div>
<div class="gc" style="left:1146px;top:333px;width:90px;height:24px;background:#fff;text-align:right;color:#000;padding:0 4px;padding-top:4px;padding-right:3px;font-size:11px;">0.00</div>
<div class="gc" style="left:197px;top:357px;width:49px;height:24px;background:#dcefe6;text-align:center;color:#000080;padding-top:4px;font-size:11px;">139</div>
<div class="gc" style="left:246px;top:357px;width:80px;height:24px;background:#f2fbff;text-align:left;color:#000;padding:0 4px;padding-top:4px;font-size:11px;"></div>
<div class="gc" style="left:326px;top:357px;width:120px;height:24px;background:#f2fbff;text-align:left;color:#000;padding:0 4px;padding-top:4px;font-size:11px;"></div>
<div class="gc" style="left:446px;top:357px;width:80px;height:24px;background:#f2fbff;text-align:left;color:#000;padding:0 4px;padding-top:4px;"></div>
<div class="gc" style="left:526px;top:357px;width:80px;height:24px;background:#f2fbff;text-align:left;color:#000;padding:0 4px;padding-top:4px;font-size:11px;"></div>
<div class="gc" style="left:606px;top:357px;width:90px;height:24px;background:#f2fbff;text-align:right;color:#000;padding:0 4px;padding-top:4px;padding-right:3px;font-size:11px;"></div>
<div class="gc" style="left:696px;top:357px;width:90px;height:24px;background:#f2fbff;text-align:right;color:#000;padding:0 4px;padding-top:4px;padding-right:3px;font-size:11px;"></div>
<div class="gc" style="left:786px;top:357px;width:90px;height:24px;background:#f2fbff;text-align:right;color:#000;padding:0 4px;padding-top:4px;padding-right:3px;font-size:11px;"></div>
<div class="gc" style="left:876px;top:357px;width:90px;height:24px;background:#f2fbff;text-align:right;color:#000;padding:0 4px;padding-top:4px;padding-right:3px;font-size:11px;"></div>
<div class="gc" style="left:966px;top:357px;width:90px;height:24px;background:#f2fbff;text-align:right;color:#000;padding:0 4px;padding-top:4px;padding-right:3px;font-size:11px;"></div>
<div class="gc" style="left:1056px;top:357px;width:90px;height:24px;background:#f2fbff;text-align:right;color:#000;padding:0 4px;padding-top:4px;padding-right:3px;font-size:11px;">0.00</div>
<div class="gc" style="left:1146px;top:357px;width:90px;height:24px;background:#f2fbff;text-align:right;color:#000;padding:0 4px;padding-top:4px;padding-right:3px;font-size:11px;">0.00</div>
<div class="gc" style="left:197px;top:381px;width:49px;height:24px;background:#dcefe6;text-align:center;color:#000080;padding-top:4px;font-size:11px;">140</div>
<div class="gc" style="left:246px;top:381px;width:80px;height:24px;background:#fff;text-align:left;color:#000;padding:0 4px;padding-top:4px;font-size:11px;"></div>
<div class="gc" style="left:326px;top:381px;width:120px;height:24px;background:#fff;text-align:left;color:#000;padding:0 4px;padding-top:4px;font-size:11px;"></div>
<div class="gc" style="left:446px;top:381px;width:80px;height:24px;background:#fff;text-align:left;color:#000;padding:0 4px;padding-top:4px;"></div>
<div class="gc" style="left:526px;top:381px;width:80px;height:24px;background:#fff;text-align:left;color:#000;padding:0 4px;padding-top:4px;font-size:11px;"></div>
<div class="gc" style="left:606px;top:381px;width:90px;height:24px;background:#fff;text-align:right;color:#000;padding:0 4px;padding-top:4px;padding-right:3px;font-size:11px;"></div>
<div class="gc" style="left:696px;top:381px;width:90px;height:24px;background:#fff;text-align:right;color:#000;padding:0 4px;padding-top:4px;padding-right:3px;font-size:11px;"></div>
<div class="gc" style="left:786px;top:381px;width:90px;height:24px;background:#fff;text-align:right;color:#000;padding:0 4px;padding-top:4px;padding-right:3px;font-size:11px;"></div>
<div class="gc" style="left:876px;top:381px;width:90px;height:24px;background:#fff;text-align:right;color:#000;padding:0 4px;padding-top:4px;padding-right:3px;font-size:11px;"></div>
<div class="gc" style="left:966px;top:381px;width:90px;height:24px;background:#fff;text-align:right;color:#000;padding:0 4px;padding-top:4px;padding-right:3px;font-size:11px;"></div>
<div class="gc" style="left:1056px;top:381px;width:90px;height:24px;background:#fff;text-align:right;color:#000;padding:0 4px;padding-top:4px;padding-right:3px;font-size:11px;">0.00</div>
<div class="gc" style="left:1146px;top:381px;width:90px;height:24px;background:#fff;text-align:right;color:#000;padding:0 4px;padding-top:4px;padding-right:3px;font-size:11px;">0.00</div>
<div class="gc" style="left:197px;top:405px;width:49px;height:24px;background:#dcefe6;text-align:center;color:#000080;padding-top:4px;font-size:11px;">141</div>
<div class="gc" style="left:246px;top:405px;width:80px;height:24px;background:#f2fbff;text-align:left;color:#000;padding:0 4px;padding-top:4px;font-size:11px;"></div>
<div class="gc" style="left:326px;top:405px;width:120px;height:24px;background:#f2fbff;text-align:left;color:#000;padding:0 4px;padding-top:4px;font-size:11px;"></div>
<div class="gc" style="left:446px;top:405px;width:80px;height:24px;background:#f2fbff;text-align:left;color:#000;padding:0 4px;padding-top:4px;"></div>
<div class="gc" style="left:526px;top:405px;width:80px;height:24px;background:#f2fbff;text-align:left;color:#000;padding:0 4px;padding-top:4px;font-size:11px;"></div>
<div class="gc" style="left:606px;top:405px;width:90px;height:24px;background:#f2fbff;text-align:right;color:#000;padding:0 4px;padding-top:4px;padding-right:3px;font-size:11px;"></div>
<div class="gc" style="left:696px;top:405px;width:90px;height:24px;background:#f2fbff;text-align:right;color:#000;padding:0 4px;padding-top:4px;padding-right:3px;font-size:11px;"></div>
<div class="gc" style="left:786px;top:405px;width:90px;height:24px;background:#f2fbff;text-align:right;color:#000;padding:0 4px;padding-top:4px;padding-right:3px;font-size:11px;"></div>
<div class="gc" style="left:876px;top:405px;width:90px;height:24px;background:#f2fbff;text-align:right;color:#000;padding:0 4px;padding-top:4px;padding-right:3px;font-size:11px;"></div>
<div class="gc" style="left:966px;top:405px;width:90px;height:24px;background:#f2fbff;text-align:right;color:#000;padding:0 4px;padding-top:4px;padding-right:3px;font-size:11px;"></div>
<div class="gc" style="left:1056px;top:405px;width:90px;height:24px;background:#f2fbff;text-align:right;color:#000;padding:0 4px;padding-top:4px;padding-right:3px;font-size:11px;">0.00</div>
<div class="gc" style="left:1146px;top:405px;width:90px;height:24px;background:#f2fbff;text-align:right;color:#000;padding:0 4px;padding-top:4px;padding-right:3px;font-size:11px;">0.00</div>
<div class="gc" style="left:197px;top:429px;width:49px;height:24px;background:#dcefe6;text-align:center;color:#000080;padding-top:4px;font-size:11px;">142</div>
<div class="gc" style="left:246px;top:429px;width:80px;height:24px;background:#fff;text-align:left;color:#000;padding:0 4px;padding-top:4px;font-size:11px;"></div>
<div class="gc" style="left:326px;top:429px;width:120px;height:24px;background:#fff;text-align:left;color:#000;padding:0 4px;padding-top:4px;font-size:11px;"></div>
<div class="gc" style="left:446px;top:429px;width:80px;height:24px;background:#fff;text-align:left;color:#000;padding:0 4px;padding-top:4px;"></div>
<div class="gc" style="left:526px;top:429px;width:80px;height:24px;background:#fff;text-align:left;color:#000;padding:0 4px;padding-top:4px;font-size:11px;"></div>
<div class="gc" style="left:606px;top:429px;width:90px;height:24px;background:#fff;text-align:right;color:#000;padding:0 4px;padding-top:4px;padding-right:3px;font-size:11px;"></div>
<div class="gc" style="left:696px;top:429px;width:90px;height:24px;background:#fff;text-align:right;color:#000;padding:0 4px;padding-top:4px;padding-right:3px;font-size:11px;"></div>
<div class="gc" style="left:786px;top:429px;width:90px;height:24px;background:#fff;text-align:right;color:#000;padding:0 4px;padding-top:4px;padding-right:3px;font-size:11px;"></div>
<div class="gc" style="left:876px;top:429px;width:90px;height:24px;background:#fff;text-align:right;color:#000;padding:0 4px;padding-top:4px;padding-right:3px;font-size:11px;"></div>
<div class="gc" style="left:966px;top:429px;width:90px;height:24px;background:#fff;text-align:right;color:#000;padding:0 4px;padding-top:4px;padding-right:3px;font-size:11px;"></div>
<div class="gc" style="left:1056px;top:429px;width:90px;height:24px;background:#fff;text-align:right;color:#000;padding:0 4px;padding-top:4px;padding-right:3px;font-size:11px;">0.00</div>
<div class="gc" style="left:1146px;top:429px;width:90px;height:24px;background:#fff;text-align:right;color:#000;padding:0 4px;padding-top:4px;padding-right:3px;font-size:11px;">0.00</div>
<div class="gc" style="left:197px;top:453px;width:49px;height:24px;background:#dcefe6;text-align:center;color:#000080;padding-top:4px;font-size:11px;">143</div>
<div class="gc" style="left:246px;top:453px;width:80px;height:24px;background:#f2fbff;text-align:left;color:#000;padding:0 4px;padding-top:4px;font-size:11px;"></div>
<div class="gc" style="left:326px;top:453px;width:120px;height:24px;background:#f2fbff;text-align:left;color:#000;padding:0 4px;padding-top:4px;font-size:11px;"></div>
<div class="gc" style="left:446px;top:453px;width:80px;height:24px;background:#f2fbff;text-align:left;color:#000;padding:0 4px;padding-top:4px;"></div>
<div class="gc" style="left:526px;top:453px;width:80px;height:24px;background:#f2fbff;text-align:left;color:#000;padding:0 4px;padding-top:4px;font-size:11px;"></div>
<div class="gc" style="left:606px;top:453px;width:90px;height:24px;background:#f2fbff;text-align:right;color:#000;padding:0 4px;padding-top:4px;padding-right:3px;font-size:11px;"></div>
<div class="gc" style="left:696px;top:453px;width:90px;height:24px;background:#f2fbff;text-align:right;color:#000;padding:0 4px;padding-top:4px;padding-right:3px;font-size:11px;"></div>
<div class="gc" style="left:786px;top:453px;width:90px;height:24px;background:#f2fbff;text-align:right;color:#000;padding:0 4px;padding-top:4px;padding-right:3px;font-size:11px;"></div>
<div class="gc" style="left:876px;top:453px;width:90px;height:24px;background:#f2fbff;text-align:right;color:#000;padding:0 4px;padding-top:4px;padding-right:3px;font-size:11px;"></div>
<div class="gc" style="left:966px;top:453px;width:90px;height:24px;background:#f2fbff;text-align:right;color:#000;padding:0 4px;padding-top:4px;padding-right:3px;font-size:11px;"></div>
<div class="gc" style="left:1056px;top:453px;width:90px;height:24px;background:#f2fbff;text-align:right;color:#000;padding:0 4px;padding-top:4px;padding-right:3px;font-size:11px;">0.00</div>
<div class="gc" style="left:1146px;top:453px;width:90px;height:24px;background:#f2fbff;text-align:right;color:#000;padding:0 4px;padding-top:4px;padding-right:3px;font-size:11px;">0.00</div>
<div class="gc" style="left:197px;top:477px;width:49px;height:24px;background:#dcefe6;text-align:center;color:#000080;padding-top:4px;font-size:11px;">144</div>
<div class="gc" style="left:246px;top:477px;width:80px;height:24px;background:#fff;text-align:left;color:#000;padding:0 4px;padding-top:4px;font-size:11px;"></div>
<div class="gc" style="left:326px;top:477px;width:120px;height:24px;background:#fff;text-align:left;color:#000;padding:0 4px;padding-top:4px;font-size:11px;"></div>
<div class="gc" style="left:446px;top:477px;width:80px;height:24px;background:#fff;text-align:left;color:#000;padding:0 4px;padding-top:4px;"></div>
<div class="gc" style="left:526px;top:477px;width:80px;height:24px;background:#fff;text-align:left;color:#000;padding:0 4px;padding-top:4px;font-size:11px;"></div>
<div class="gc" style="left:606px;top:477px;width:90px;height:24px;background:#fff;text-align:right;color:#000;padding:0 4px;padding-top:4px;padding-right:3px;font-size:11px;"></div>
<div class="gc" style="left:696px;top:477px;width:90px;height:24px;background:#fff;text-align:right;color:#000;padding:0 4px;padding-top:4px;padding-right:3px;font-size:11px;"></div>
<div class="gc" style="left:786px;top:477px;width:90px;height:24px;background:#fff;text-align:right;color:#000;padding:0 4px;padding-top:4px;padding-right:3px;font-size:11px;"></div>
<div class="gc" style="left:876px;top:477px;width:90px;height:24px;background:#fff;text-align:right;color:#000;padding:0 4px;padding-top:4px;padding-right:3px;font-size:11px;"></div>
<div class="gc" style="left:966px;top:477px;width:90px;height:24px;background:#fff;text-align:right;color:#000;padding:0 4px;padding-top:4px;padding-right:3px;font-size:11px;"></div>
<div class="gc" style="left:1056px;top:477px;width:90px;height:24px;background:#fff;text-align:right;color:#000;padding:0 4px;padding-top:4px;padding-right:3px;font-size:11px;">0.00</div>
<div class="gc" style="left:1146px;top:477px;width:90px;height:24px;background:#fff;text-align:right;color:#000;padding:0 4px;padding-top:4px;padding-right:3px;font-size:11px;">0.00</div>
<div class="gc" style="left:197px;top:501px;width:49px;height:24px;background:#dcefe6;text-align:center;color:#000080;padding-top:4px;font-size:11px;">145</div>
<div class="gc" style="left:246px;top:501px;width:80px;height:24px;background:#f2fbff;text-align:left;color:#000;padding:0 4px;padding-top:4px;font-size:11px;"></div>
<div class="gc" style="left:326px;top:501px;width:120px;height:24px;background:#f2fbff;text-align:left;color:#000;padding:0 4px;padding-top:4px;font-size:11px;"></div>
<div class="gc" style="left:446px;top:501px;width:80px;height:24px;background:#f2fbff;text-align:left;color:#000;padding:0 4px;padding-top:4px;"></div>
<div class="gc" style="left:526px;top:501px;width:80px;height:24px;background:#f2fbff;text-align:left;color:#000;padding:0 4px;padding-top:4px;font-size:11px;"></div>
<div class="gc" style="left:606px;top:501px;width:90px;height:24px;background:#f2fbff;text-align:right;color:#000;padding:0 4px;padding-top:4px;padding-right:3px;font-size:11px;"></div>
<div class="gc" style="left:696px;top:501px;width:90px;height:24px;background:#f2fbff;text-align:right;color:#000;padding:0 4px;padding-top:4px;padding-right:3px;font-size:11px;"></div>
<div class="gc" style="left:786px;top:501px;width:90px;height:24px;background:#f2fbff;text-align:right;color:#000;padding:0 4px;padding-top:4px;padding-right:3px;font-size:11px;"></div>
<div class="gc" style="left:876px;top:501px;width:90px;height:24px;background:#f2fbff;text-align:right;color:#000;padding:0 4px;padding-top:4px;padding-right:3px;font-size:11px;"></div>
<div class="gc" style="left:966px;top:501px;width:90px;height:24px;background:#f2fbff;text-align:right;color:#000;padding:0 4px;padding-top:4px;padding-right:3px;font-size:11px;"></div>
<div class="gc" style="left:1056px;top:501px;width:90px;height:24px;background:#f2fbff;text-align:right;color:#000;padding:0 4px;padding-top:4px;padding-right:3px;font-size:11px;">0.00</div>
<div class="gc" style="left:1146px;top:501px;width:90px;height:24px;background:#f2fbff;text-align:right;color:#000;padding:0 4px;padding-top:4px;padding-right:3px;font-size:11px;">0.00</div>
<div class="gc" style="left:197px;top:525px;width:49px;height:24px;background:#dcefe6;text-align:center;color:#000080;padding-top:4px;font-size:11px;">146</div>
<div class="gc" style="left:246px;top:525px;width:80px;height:24px;background:#fff;text-align:left;color:#000;padding:0 4px;padding-top:4px;font-size:11px;"></div>
<div class="gc" style="left:326px;top:525px;width:120px;height:24px;background:#fff;text-align:left;color:#000;padding:0 4px;padding-top:4px;font-size:11px;"></div>
<div class="gc" style="left:446px;top:525px;width:80px;height:24px;background:#fff;text-align:left;color:#000;padding:0 4px;padding-top:4px;"></div>
<div class="gc" style="left:526px;top:525px;width:80px;height:24px;background:#fff;text-align:left;color:#000;padding:0 4px;padding-top:4px;font-size:11px;"></div>
<div class="gc" style="left:606px;top:525px;width:90px;height:24px;background:#fff;text-align:right;color:#000;padding:0 4px;padding-top:4px;padding-right:3px;font-size:11px;"></div>
<div class="gc" style="left:696px;top:525px;width:90px;height:24px;background:#fff;text-align:right;color:#000;padding:0 4px;padding-top:4px;padding-right:3px;font-size:11px;"></div>
<div class="gc" style="left:786px;top:525px;width:90px;height:24px;background:#fff;text-align:right;color:#000;padding:0 4px;padding-top:4px;padding-right:3px;font-size:11px;"></div>
<div class="gc" style="left:876px;top:525px;width:90px;height:24px;background:#fff;text-align:right;color:#000;padding:0 4px;padding-top:4px;padding-right:3px;font-size:11px;"></div>
<div class="gc" style="left:966px;top:525px;width:90px;height:24px;background:#fff;text-align:right;color:#000;padding:0 4px;padding-top:4px;padding-right:3px;font-size:11px;"></div>
<div class="gc" style="left:1056px;top:525px;width:90px;height:24px;background:#fff;text-align:right;color:#000;padding:0 4px;padding-top:4px;padding-right:3px;font-size:11px;">0.00</div>
<div class="gc" style="left:1146px;top:525px;width:90px;height:24px;background:#fff;text-align:right;color:#000;padding:0 4px;padding-top:4px;padding-right:3px;font-size:11px;">0.00</div>
<div class="gc" style="left:197px;top:549px;width:49px;height:24px;background:#dcefe6;text-align:center;color:#000080;padding-top:4px;font-size:11px;">147</div>
<div class="gc" style="left:246px;top:549px;width:80px;height:24px;background:#f2fbff;text-align:left;color:#000;padding:0 4px;padding-top:4px;font-size:11px;"></div>
<div class="gc" style="left:326px;top:549px;width:120px;height:24px;background:#f2fbff;text-align:left;color:#000;padding:0 4px;padding-top:4px;font-size:11px;"></div>
<div class="gc" style="left:446px;top:549px;width:80px;height:24px;background:#f2fbff;text-align:left;color:#000;padding:0 4px;padding-top:4px;"></div>
<div class="gc" style="left:526px;top:549px;width:80px;height:24px;background:#f2fbff;text-align:left;color:#000;padding:0 4px;padding-top:4px;font-size:11px;"></div>
<div class="gc" style="left:606px;top:549px;width:90px;height:24px;background:#f2fbff;text-align:right;color:#000;padding:0 4px;padding-top:4px;padding-right:3px;font-size:11px;"></div>
<div class="gc" style="left:696px;top:549px;width:90px;height:24px;background:#f2fbff;text-align:right;color:#000;padding:0 4px;padding-top:4px;padding-right:3px;font-size:11px;"></div>
<div class="gc" style="left:786px;top:549px;width:90px;height:24px;background:#f2fbff;text-align:right;color:#000;padding:0 4px;padding-top:4px;padding-right:3px;font-size:11px;"></div>
<div class="gc" style="left:876px;top:549px;width:90px;height:24px;background:#f2fbff;text-align:right;color:#000;padding:0 4px;padding-top:4px;padding-right:3px;font-size:11px;"></div>
<div class="gc" style="left:966px;top:549px;width:90px;height:24px;background:#f2fbff;text-align:right;color:#000;padding:0 4px;padding-top:4px;padding-right:3px;font-size:11px;"></div>
<div class="gc" style="left:1056px;top:549px;width:90px;height:24px;background:#f2fbff;text-align:right;color:#000;padding:0 4px;padding-top:4px;padding-right:3px;font-size:11px;">0.00</div>
<div class="gc" style="left:1146px;top:549px;width:90px;height:24px;background:#f2fbff;text-align:right;color:#000;padding:0 4px;padding-top:4px;padding-right:3px;font-size:11px;">0.00</div>
<div class="gc" style="left:197px;top:573px;width:49px;height:24px;background:#dcefe6;text-align:center;color:#000080;padding-top:4px;font-size:11px;">148</div>
<div class="gc" style="left:246px;top:573px;width:80px;height:24px;background:#fff;text-align:left;color:#000;padding:0 4px;padding-top:4px;font-size:11px;"></div>
<div class="gc" style="left:326px;top:573px;width:120px;height:24px;background:#fff;text-align:left;color:#000;padding:0 4px;padding-top:4px;font-size:11px;"></div>
<div class="gc" style="left:446px;top:573px;width:80px;height:24px;background:#fff;text-align:left;color:#000;padding:0 4px;padding-top:4px;"></div>
<div class="gc" style="left:526px;top:573px;width:80px;height:24px;background:#fff;text-align:left;color:#000;padding:0 4px;padding-top:4px;font-size:11px;"></div>
<div class="gc" style="left:606px;top:573px;width:90px;height:24px;background:#fff;text-align:right;color:#000;padding:0 4px;padding-top:4px;padding-right:3px;font-size:11px;"></div>
<div class="gc" style="left:696px;top:573px;width:90px;height:24px;background:#fff;text-align:right;color:#000;padding:0 4px;padding-top:4px;padding-right:3px;font-size:11px;"></div>
<div class="gc" style="left:786px;top:573px;width:90px;height:24px;background:#fff;text-align:right;color:#000;padding:0 4px;padding-top:4px;padding-right:3px;font-size:11px;"></div>
<div class="gc" style="left:876px;top:573px;width:90px;height:24px;background:#fff;text-align:right;color:#000;padding:0 4px;padding-top:4px;padding-right:3px;font-size:11px;"></div>
<div class="gc" style="left:966px;top:573px;width:90px;height:24px;background:#fff;text-align:right;color:#000;padding:0 4px;padding-top:4px;padding-right:3px;font-size:11px;"></div>
<div class="gc" style="left:1056px;top:573px;width:90px;height:24px;background:#fff;text-align:right;color:#000;padding:0 4px;padding-top:4px;padding-right:3px;font-size:11px;">0.00</div>
<div class="gc" style="left:1146px;top:573px;width:90px;height:24px;background:#fff;text-align:right;color:#000;padding:0 4px;padding-top:4px;padding-right:3px;font-size:11px;">0.00</div>
<div class="gc" style="left:197px;top:597px;width:49px;height:24px;background:#dcefe6;text-align:center;color:#000080;padding-top:4px;font-size:11px;">149</div>
<div class="gc" style="left:246px;top:597px;width:80px;height:24px;background:#f2fbff;text-align:left;color:#000;padding:0 4px;padding-top:4px;font-size:11px;"></div>
<div class="gc" style="left:326px;top:597px;width:120px;height:24px;background:#f2fbff;text-align:left;color:#000;padding:0 4px;padding-top:4px;font-size:11px;"></div>
<div class="gc" style="left:446px;top:597px;width:80px;height:24px;background:#f2fbff;text-align:left;color:#000;padding:0 4px;padding-top:4px;"></div>
<div class="gc" style="left:526px;top:597px;width:80px;height:24px;background:#f2fbff;text-align:left;color:#000;padding:0 4px;padding-top:4px;font-size:11px;"></div>
<div class="gc" style="left:606px;top:597px;width:90px;height:24px;background:#f2fbff;text-align:right;color:#000;padding:0 4px;padding-top:4px;padding-right:3px;font-size:11px;"></div>
<div class="gc" style="left:696px;top:597px;width:90px;height:24px;background:#f2fbff;text-align:right;color:#000;padding:0 4px;padding-top:4px;padding-right:3px;font-size:11px;"></div>
<div class="gc" style="left:786px;top:597px;width:90px;height:24px;background:#f2fbff;text-align:right;color:#000;padding:0 4px;padding-top:4px;padding-right:3px;font-size:11px;"></div>
<div class="gc" style="left:876px;top:597px;width:90px;height:24px;background:#f2fbff;text-align:right;color:#000;padding:0 4px;padding-top:4px;padding-right:3px;font-size:11px;"></div>
<div class="gc" style="left:966px;top:597px;width:90px;height:24px;background:#f2fbff;text-align:right;color:#000;padding:0 4px;padding-top:4px;padding-right:3px;font-size:11px;"></div>
<div class="gc" style="left:1056px;top:597px;width:90px;height:24px;background:#f2fbff;text-align:right;color:#000;padding:0 4px;padding-top:4px;padding-right:3px;font-size:11px;">0.00</div>
<div class="gc" style="left:1146px;top:597px;width:90px;height:24px;background:#f2fbff;text-align:right;color:#000;padding:0 4px;padding-top:4px;padding-right:3px;font-size:11px;">0.00</div>
<div class="gc" style="left:197px;top:621px;width:49px;height:24px;background:#dcefe6;text-align:center;color:#000080;padding-top:4px;font-size:11px;">150</div>
<div class="gc" style="left:246px;top:621px;width:80px;height:24px;background:#fff;text-align:left;color:#000;padding:0 4px;padding-top:4px;font-size:11px;"></div>
<div class="gc" style="left:326px;top:621px;width:120px;height:24px;background:#fff;text-align:left;color:#000;padding:0 4px;padding-top:4px;font-size:11px;"></div>
<div class="gc" style="left:446px;top:621px;width:80px;height:24px;background:#fff;text-align:left;color:#000;padding:0 4px;padding-top:4px;"></div>
<div class="gc" style="left:526px;top:621px;width:80px;height:24px;background:#fff;text-align:left;color:#000;padding:0 4px;padding-top:4px;font-size:11px;"></div>
<div class="gc" style="left:606px;top:621px;width:90px;height:24px;background:#fff;text-align:right;color:#000;padding:0 4px;padding-top:4px;padding-right:3px;font-size:11px;"></div>
<div class="gc" style="left:696px;top:621px;width:90px;height:24px;background:#fff;text-align:right;color:#000;padding:0 4px;padding-top:4px;padding-right:3px;font-size:11px;"></div>
<div class="gc" style="left:786px;top:621px;width:90px;height:24px;background:#fff;text-align:right;color:#000;padding:0 4px;padding-top:4px;padding-right:3px;font-size:11px;"></div>
<div class="gc" style="left:876px;top:621px;width:90px;height:24px;background:#fff;text-align:right;color:#000;padding:0 4px;padding-top:4px;padding-right:3px;font-size:11px;"></div>
<div class="gc" style="left:966px;top:621px;width:90px;height:24px;background:#fff;text-align:right;color:#000;padding:0 4px;padding-top:4px;padding-right:3px;font-size:11px;"></div>
<div class="gc" style="left:1056px;top:621px;width:90px;height:24px;background:#fff;text-align:right;color:#000;padding:0 4px;padding-top:4px;padding-right:3px;font-size:11px;">0.00</div>
<div class="gc" style="left:1146px;top:621px;width:90px;height:24px;background:#fff;text-align:right;color:#000;padding:0 4px;padding-top:4px;padding-right:3px;font-size:11px;">0.00</div>
<div class="gc" style="left:197px;top:645px;width:49px;height:24px;background:#dcefe6;text-align:center;color:#000080;padding-top:4px;font-size:11px;">151</div>
<div class="gc" style="left:246px;top:645px;width:80px;height:24px;background:#f2fbff;text-align:left;color:#000;padding:0 4px;padding-top:4px;font-size:11px;"></div>
<div class="gc" style="left:326px;top:645px;width:120px;height:24px;background:#f2fbff;text-align:left;color:#000;padding:0 4px;padding-top:4px;font-size:11px;"></div>
<div class="gc" style="left:446px;top:645px;width:80px;height:24px;background:#f2fbff;text-align:left;color:#000;padding:0 4px;padding-top:4px;"></div>
<div class="gc" style="left:526px;top:645px;width:80px;height:24px;background:#f2fbff;text-align:left;color:#000;padding:0 4px;padding-top:4px;font-size:11px;"></div>
<div class="gc" style="left:606px;top:645px;width:90px;height:24px;background:#f2fbff;text-align:right;color:#000;padding:0 4px;padding-top:4px;padding-right:3px;font-size:11px;"></div>
<div class="gc" style="left:696px;top:645px;width:90px;height:24px;background:#f2fbff;text-align:right;color:#000;padding:0 4px;padding-top:4px;padding-right:3px;font-size:11px;"></div>
<div class="gc" style="left:786px;top:645px;width:90px;height:24px;background:#f2fbff;text-align:right;color:#000;padding:0 4px;padding-top:4px;padding-right:3px;font-size:11px;"></div>
<div class="gc" style="left:876px;top:645px;width:90px;height:24px;background:#f2fbff;text-align:right;color:#000;padding:0 4px;padding-top:4px;padding-right:3px;font-size:11px;"></div>
<div class="gc" style="left:966px;top:645px;width:90px;height:24px;background:#f2fbff;text-align:right;color:#000;padding:0 4px;padding-top:4px;padding-right:3px;font-size:11px;"></div>
<div class="gc" style="left:1056px;top:645px;width:90px;height:24px;background:#f2fbff;text-align:right;color:#000;padding:0 4px;padding-top:4px;padding-right:3px;font-size:11px;">0.00</div>
<div class="gc" style="left:1146px;top:645px;width:90px;height:24px;background:#f2fbff;text-align:right;color:#000;padding:0 4px;padding-top:4px;padding-right:3px;font-size:11px;">0.00</div>
<div class="gc" style="left:197px;top:669px;width:49px;height:24px;background:#dcefe6;text-align:center;color:#000080;padding-top:4px;font-size:11px;">152</div>
<div class="gc" style="left:246px;top:669px;width:80px;height:24px;background:#fff;text-align:left;color:#000;padding:0 4px;padding-top:4px;font-size:11px;"></div>
<div class="gc" style="left:326px;top:669px;width:120px;height:24px;background:#fff;text-align:left;color:#000;padding:0 4px;padding-top:4px;font-size:11px;"></div>
<div class="gc" style="left:446px;top:669px;width:80px;height:24px;background:#fff;text-align:left;color:#000;padding:0 4px;padding-top:4px;"></div>
<div class="gc" style="left:526px;top:669px;width:80px;height:24px;background:#fff;text-align:left;color:#000;padding:0 4px;padding-top:4px;font-size:11px;"></div>
<div class="gc" style="left:606px;top:669px;width:90px;height:24px;background:#fff;text-align:right;color:#000;padding:0 4px;padding-top:4px;padding-right:3px;font-size:11px;"></div>
<div class="gc" style="left:696px;top:669px;width:90px;height:24px;background:#fff;text-align:right;color:#000;padding:0 4px;padding-top:4px;padding-right:3px;font-size:11px;"></div>
<div class="gc" style="left:786px;top:669px;width:90px;height:24px;background:#fff;text-align:right;color:#000;padding:0 4px;padding-top:4px;padding-right:3px;font-size:11px;"></div>
<div class="gc" style="left:876px;top:669px;width:90px;height:24px;background:#fff;text-align:right;color:#000;padding:0 4px;padding-top:4px;padding-right:3px;font-size:11px;"></div>
<div class="gc" style="left:966px;top:669px;width:90px;height:24px;background:#fff;text-align:right;color:#000;padding:0 4px;padding-top:4px;padding-right:3px;font-size:11px;"></div>
<div class="gc" style="left:1056px;top:669px;width:90px;height:24px;background:#fff;text-align:right;color:#000;padding:0 4px;padding-top:4px;padding-right:3px;font-size:11px;">0.00</div>
<div class="gc" style="left:1146px;top:669px;width:90px;height:24px;background:#fff;text-align:right;color:#000;padding:0 4px;padding-top:4px;padding-right:3px;font-size:11px;">0.00</div>
<div class="gc" style="left:197px;top:693px;width:49px;height:24px;background:#dcefe6;text-align:center;color:#000080;padding-top:4px;font-size:11px;">153</div>
<div class="gc" style="left:246px;top:693px;width:80px;height:24px;background:#f2fbff;text-align:left;color:#000;padding:0 4px;padding-top:4px;font-size:11px;"></div>
<div class="gc" style="left:326px;top:693px;width:120px;height:24px;background:#f2fbff;text-align:left;color:#000;padding:0 4px;padding-top:4px;font-size:11px;"></div>
<div class="gc" style="left:446px;top:693px;width:80px;height:24px;background:#f2fbff;text-align:left;color:#000;padding:0 4px;padding-top:4px;"></div>
<div class="gc" style="left:526px;top:693px;width:80px;height:24px;background:#f2fbff;text-align:left;color:#000;padding:0 4px;padding-top:4px;font-size:11px;"></div>
<div class="gc" style="left:606px;top:693px;width:90px;height:24px;background:#f2fbff;text-align:right;color:#000;padding:0 4px;padding-top:4px;padding-right:3px;font-size:11px;"></div>
<div class="gc" style="left:696px;top:693px;width:90px;height:24px;background:#f2fbff;text-align:right;color:#000;padding:0 4px;padding-top:4px;padding-right:3px;font-size:11px;"></div>
<div class="gc" style="left:786px;top:693px;width:90px;height:24px;background:#f2fbff;text-align:right;color:#000;padding:0 4px;padding-top:4px;padding-right:3px;font-size:11px;"></div>
<div class="gc" style="left:876px;top:693px;width:90px;height:24px;background:#f2fbff;text-align:right;color:#000;padding:0 4px;padding-top:4px;padding-right:3px;font-size:11px;"></div>
<div class="gc" style="left:966px;top:693px;width:90px;height:24px;background:#f2fbff;text-align:right;color:#000;padding:0 4px;padding-top:4px;padding-right:3px;font-size:11px;"></div>
<div class="gc" style="left:1056px;top:693px;width:90px;height:24px;background:#f2fbff;text-align:right;color:#000;padding:0 4px;padding-top:4px;padding-right:3px;font-size:11px;">0.00</div>
<div class="gc" style="left:1146px;top:693px;width:90px;height:24px;background:#f2fbff;text-align:right;color:#000;padding:0 4px;padding-top:4px;padding-right:3px;font-size:11px;">0.00</div>
<div class="gc" style="left:197px;top:717px;width:49px;height:7px;background:#dcefe6;text-align:center;color:#000;padding-top:-4px;"></div>
<div class="gc" style="left:197px;top:724px;width:49px;height:22px;background:#eeeeee;text-align:right;color:#000;padding:0 4px;padding-top:3px;padding-right:3px;font-size:11px;border-bottom:none;"></div>
<div class="gc" style="left:246px;top:717px;width:80px;height:7px;background:#fff;text-align:center;color:#000;padding-top:-4px;"></div>
<div class="gc" style="left:246px;top:724px;width:80px;height:22px;background:#eeeeee;text-align:right;color:#000;padding:0 4px;padding-top:3px;padding-right:3px;font-size:11px;border-bottom:none;"></div>
<div class="gc" style="left:326px;top:717px;width:120px;height:7px;background:#fff;text-align:center;color:#000;padding-top:-4px;"></div>
<div class="gc" style="left:326px;top:724px;width:120px;height:22px;background:#eeeeee;text-align:right;color:#000;padding:0 4px;padding-top:3px;padding-right:3px;font-size:11px;border-bottom:none;"></div>
<div class="gc" style="left:446px;top:717px;width:80px;height:7px;background:#fff;text-align:center;color:#000;padding-top:-4px;"></div>
<div class="gc" style="left:446px;top:724px;width:80px;height:22px;background:#eeeeee;text-align:right;color:#000;padding:0 4px;padding-top:3px;padding-right:3px;font-size:11px;border-bottom:none;"></div>
<div class="gc" style="left:526px;top:717px;width:80px;height:7px;background:#fff;text-align:center;color:#000;padding-top:-4px;"></div>
<div class="gc" style="left:526px;top:724px;width:80px;height:22px;background:#eeeeee;text-align:right;color:#000;padding:0 4px;padding-top:3px;padding-right:3px;font-size:11px;border-bottom:none;"></div>
<div class="gc" style="left:606px;top:717px;width:90px;height:7px;background:#fff;text-align:center;color:#000;padding-top:-4px;"></div>
<div class="gc" style="left:606px;top:724px;width:90px;height:22px;background:#eeeeee;text-align:right;color:#000;padding:0 4px;padding-top:3px;padding-right:3px;font-size:11px;border-bottom:none;">0.00</div>
<div class="gc" style="left:696px;top:717px;width:90px;height:7px;background:#fff;text-align:center;color:#000;padding-top:-4px;"></div>
<div class="gc" style="left:696px;top:724px;width:90px;height:22px;background:#eeeeee;text-align:right;color:#000;padding:0 4px;padding-top:3px;padding-right:3px;font-size:11px;border-bottom:none;">0.00</div>
<div class="gc" style="left:786px;top:717px;width:90px;height:7px;background:#fff;text-align:center;color:#000;padding-top:-4px;"></div>
<div class="gc" style="left:786px;top:724px;width:90px;height:22px;background:#eeeeee;text-align:right;color:#000;padding:0 4px;padding-top:3px;padding-right:3px;font-size:11px;border-bottom:none;">0.00</div>
<div class="gc" style="left:876px;top:717px;width:90px;height:7px;background:#fff;text-align:center;color:#000;padding-top:-4px;"></div>
<div class="gc" style="left:876px;top:724px;width:90px;height:22px;background:#eeeeee;text-align:right;color:#000;padding:0 4px;padding-top:3px;padding-right:3px;font-size:11px;border-bottom:none;">0.00</div>
<div class="gc" style="left:966px;top:717px;width:90px;height:7px;background:#fff;text-align:center;color:#000;padding-top:-4px;"></div>
<div class="gc" style="left:966px;top:724px;width:90px;height:22px;background:#eeeeee;text-align:right;color:#000;padding:0 4px;padding-top:3px;padding-right:3px;font-size:11px;border-bottom:none;">0.00</div>
<div class="gc" style="left:1056px;top:717px;width:90px;height:7px;background:#fff;text-align:center;color:#000;padding-top:-4px;"></div>
<div class="gc" style="left:1056px;top:724px;width:90px;height:22px;background:#eeeeee;text-align:right;color:#000;padding:0 4px;padding-top:3px;padding-right:3px;font-size:11px;border-bottom:none;">0.00</div>
<div class="gc" style="left:1146px;top:717px;width:90px;height:7px;background:#fff;text-align:center;color:#000;padding-top:-4px;"></div>
<div class="gc" style="left:1146px;top:724px;width:90px;height:22px;background:#eeeeee;text-align:right;color:#000;padding:0 4px;padding-top:3px;padding-right:3px;font-size:11px;border-bottom:none;">0.00</div>
<div class="a" style="left:197px;top:746px;width:1078px;height:18px;background:linear-gradient(#ebebe5 0,#f6f6f2 8px,#fdfdfb 15px,#d8d8d0 16px,#fff 17px)"></div>
<div class="sbb" style="left:197px;top:747px;width:17px;height:17px;"></div>
<svg class="a" style="left:201px;top:751px" width="9" height="9" viewBox="0 0 9 9"><path d="M5.500 1l-3.500 3.500 3.500 3.500" fill="none" stroke="#4d6185" stroke-width="2"/></svg>
<div class="a" style="left:1237px;top:141px;width:38px;height:606px;background:linear-gradient(#fff 0,#fff 70%,#eef3fa 100%)"></div>
<div class="a" style="left:208px;top:197px;width:922px;height:580px;border-radius:8px 8px 0 0;background:#6b7fe0;overflow:hidden">
</div>
<div class="a" style="left:208px;top:197px;width:922px;height:30px;border-radius:8px 8px 0 0;background:linear-gradient(#90a6ec 0,#7b97e1 3px,#7a96e0 13px,#86a4e7 24px,#7d9be3 27px,#6f86da 30px)"></div>
<div class="a" style="left:208px;top:227px;width:4px;height:540px;background:linear-gradient(90deg,#5f6ad2,#7488e4 60%,#7e92ea)"></div>
<div class="a" style="left:1126px;top:227px;width:4px;height:540px;background:linear-gradient(90deg,#7a86dc,#6a76d8 50%,#4c58c8)"></div>
<div class="a" style="left:1125px;top:228px;width:1px;height:536px;background:#b4ae9a"></div>
<svg class="a" style="left:213px;top:203px" width="18" height="18" viewBox="0 0 18 18"><path d="M7.500 6.500h3.500M9.500 6.500v6h2" fill="none" stroke="#8a8a8a" stroke-width="1"/><path d="M4.800 0.800L8.800 4.300 4.300 8.800 0.800 5.300z" fill="#ffff00" stroke="#000" stroke-width="1"/><path d="M14.500 4L17 6.500 13 10 10.500 7.500z" fill="#e800c8" stroke="#000" stroke-width="1"/><path d="M13.500 10.500L16.500 13 12.500 16.200 9.500 13.700z" fill="#00d0d0" stroke="#000" stroke-width="1"/></svg>
<div class="t" style="left:234px;top:206px;color:#fff;font-family:'Liberation Serif','Noto Serif CJK SC',serif;font-weight:bold;font-size:13px;letter-spacing:1px;line-height:16px;height:16px;text-shadow:0 0 1px #dfe6ff">销售发货单</div>
<div class="a" style="left:1058px;top:204px;width:19px;height:19px;background:linear-gradient(135deg,#8ea2ec,#7a92e4);border:1px solid #c8d4f8;border-radius:3px"></div>
<div class="a" style="left:1063px;top:216px;width:7px;height:2px;background:#a8b4f0"></div>
<div class="a" style="left:1081px;top:204px;width:19px;height:19px;background:linear-gradient(135deg,#8fa6f0,#5f7ce0);border:1px solid #c8d4f8;border-radius:3px"></div>
<div class="a" style="left:1085px;top:208px;width:11px;height:10px;border:1px solid #fff;border-top-width:3px"></div>
<div class="a" style="left:1104px;top:204px;width:19px;height:19px;background:linear-gradient(135deg,#d8a0b0,#b06080);border:1px solid #c8d4f8;border-radius:3px"></div>
<svg class="a" style="left:1108px;top:208px" width="11" height="11" viewBox="0 0 11 11"><path d="M1 1l9 9M10 1l-9 9" stroke="#fff" stroke-width="2"/></svg>
<div class="a" style="left:212px;top:227px;width:914px;height:34px;background:#e6e9d9"></div>
<div class="a" style="left:212px;top:261px;width:914px;height:116px;background:#fffbf0"></div>
<svg class="a" style="left:224px;top:241px" width="16" height="9" viewBox="0 0 16 9"><rect x="13.300" y="0" width="2.700" height="9" fill="#000"/><rect x="11.400" y="0.500" width="1" height="8" fill="#000"/><path d="M11.500 1H7.500L5.500 0.500H1.500Q0.500 0.500 0.500 1.600 0.500 2.800 1.500 2.800H5.500Q4.300 3 4.300 4 4.300 5 5.300 5 4.800 5.200 4.800 6 4.800 6.800 5.800 6.800 5.600 7.200 5.900 7.800 6.300 8.500 7.500 8.500H11.500Z" fill="#fff" stroke="#000" stroke-width="1"/><path d="M5.500 2.800H7.500M5.300 5H7.300M5.800 6.800H7.300" stroke="#000" stroke-width="0.800" fill="none"/></svg>
<div class="t" style="left:244px;top:239px;">前单<u>L</u></div>
<svg class="a" style="left:293px;top:241px" width="16" height="9" viewBox="0 0 16 9"><g transform="translate(16,0) scale(-1,1)"><rect x="13.300" y="0" width="2.700" height="9" fill="#000"/><rect x="11.400" y="0.500" width="1" height="8" fill="#000"/><path d="M11.500 1H7.500L5.500 0.500H1.500Q0.500 0.500 0.500 1.600 0.500 2.800 1.500 2.800H5.500Q4.300 3 4.300 4 4.300 5 5.300 5 4.800 5.200 4.800 6 4.800 6.800 5.800 6.800 5.600 7.200 5.900 7.800 6.300 8.500 7.500 8.500H11.500Z" fill="#fff" stroke="#000" stroke-width="1"/><path d="M5.500 2.800H7.500M5.300 5H7.300M5.800 6.800H7.300" stroke="#000" stroke-width="0.800" fill="none"/></g></svg>
<div class="t" style="left:313px;top:239px;">后单<u>N</u></div>
<svg class="a" style="left:362px;top:238px" width="15" height="15" viewBox="0 0 15 15"><path d="M5 2h6v5h3.500l-6.500 7.500-6.500-7.500h3.500z" fill="#9a9a9a"/><path d="M4 0.500h5.500v5h3.500l-6.200 7.500-6.300-7.500h3.500z" fill="#1a1a1a"/></svg>
<div class="t" style="left:381px;top:239px;">功能<u>O</u></div>
<svg class="a" style="left:426px;top:237px" width="14" height="15" viewBox="0 0 14 15"><path d="M2.500 0.500H12.500V10.500L9.500 14.500H2.500Z" fill="#fff" stroke="#000"/><path d="M12.500 10.500H9.500V14.500" fill="#ddd" stroke="#000"/><path d="M0 4h3V1.500h3V4h3v3H6v2.500H3V7H0z" fill="#0048d8"/><rect x="4" y="11" width="2" height="2" fill="#00c000"/></svg>
<div class="t" style="left:444px;top:239px;">打印<u>P</u></div>
<svg class="a" style="left:484px;top:238px" width="16" height="13" viewBox="0 0 16 13"><path d="M5 1h7l1 3H3z" fill="#fff" stroke="#666"/><path d="M1.500 6l2-2h9l2 2v4l-2 2h-9l-2-2z" fill="#f4f4f4" stroke="#555"/><path d="M6 2l4 2M6 4l4-2" stroke="#e00000" stroke-width="1"/><path d="M4 8h8" stroke="#999"/></svg>
<div class="t" style="left:543px;top:239px;">执行情况</div>
<svg class="a" style="left:667px;top:237px" width="17" height="15" viewBox="0 0 17 15"><path d="M0.500 8l3-1.500 2.500 4C8 6 12 2 16.500 0 12 4 9 9 7 14H5.500z" fill="#d00000"/></svg>
<div class="t" style="left:687px;top:239px;">反审核<u>U</u></div>
<svg class="a" style="left:746px;top:237px" width="14" height="15" viewBox="0 0 14 15"><path d="M2.500 0.500H12.500V10.500L9.500 14.500H2.500Z" fill="#fff" stroke="#000"/><path d="M12.500 10.500H9.500V14.500" fill="#ddd" stroke="#000"/><path d="M0 4h3V1.500h3V4h3v3H6v2.500H3V7H0z" fill="#0048d8"/><rect x="4" y="11" width="2" height="2" fill="#00c000"/></svg>
<div class="t" style="left:765px;top:239px;">新增<u>A</u></div>
<svg class="a" style="left:889px;top:237px" width="15" height="15" viewBox="0 0 15 15"><path d="M10 3.500h4v11h-4z" fill="#888" stroke="#000"/><rect x="9.500" y="0.500" width="3" height="3" fill="#fff" stroke="#000080"/><path d="M7.500 5l2 1.500v4l1 3.500H8.500l-1-3-1 3H4l2-4.500V8L4 9.500V8z" fill="#000"/><path d="M0 11.500h4" stroke="#000" stroke-dasharray="1 1"/></svg>
<div class="t" style="left:908px;top:239px;">返回<u>R</u></div>
<div class="t" style="left:222px;top:263px;font-family:'Liberation Serif','Noto Serif CJK SC',serif;font-weight:600;font-size:22px;line-height:28px;height:28px;letter-spacing:1.8px;color:#5800d8">销售发货单</div>
<svg class="a" style="left:429px;top:264px" width="72" height="26" viewBox="0 0 72 26"><ellipse cx="36" cy="13" rx="34" ry="11" fill="none" stroke="#0000e0" stroke-width="2"/></svg>
<div class="t" style="left:447px;top:270px;color:#ff0000">已审核</div>
<div class="t" style="left:511px;top:270px;">单据日期</div>
<div class="combo" style="left:571px;top:266px;width:114px;background:#fff"><div class="v" style="color:#a0a0a0">2016-05-23</div><div class="btn dis"></div></div>
<div class="t" style="left:726px;top:270px;">单据编号</div>
<div class="inp" style="left:796px;top:266px;width:141px;height:22px;"><div class="v" style="">BB-16-05-23-0001</div></div>
<div class="t" style="left:267px;top:308px;letter-spacing:1px">客 户</div>
<div class="inp" style="left:322px;top:303px;width:145px;height:22px;"><div class="v" style="top:4px">湖南衡阳代理（谭直保）</div></div>
<div class="t" style="left:260px;top:332px;">传真电话</div>
<div class="inp" style="left:322px;top:329px;width:145px;height:22px;"><div class="v" style=""></div></div>
<div class="t" style="left:260px;top:358px;">交付期限</div>
<div class="combo" style="left:322px;top:354px;width:145px;background:#fff"><div class="v" style="color:#a0a0a0">2016-05-23</div><div class="btn dis"></div></div>
<div class="t" style="left:557px;top:308px;">联系人</div>
<div class="inp" style="left:611px;top:303px;width:144px;height:22px;"><div class="v" style=""></div></div>
<div class="t" style="left:549px;top:332px;">企业地址</div>
<div class="inp" style="left:611px;top:329px;width:144px;height:22px;"><div class="v" style=""></div></div>
<div class="t" style="left:549px;top:358px;">结算期限</div>
<div class="combo" style="left:611px;top:354px;width:144px;background:#fff"><div class="v" style="color:#a0a0a0">2016-05-23</div><div class="btn dis"></div></div>
<div class="t" style="left:838px;top:308px;">联系电话</div>
<div class="inp" style="left:900px;top:303px;width:145px;height:22px;"><div class="v" style=""></div></div>
<div class="t" style="left:838px;top:332px;">操作仓库</div>
<div class="inp" style="left:900px;top:329px;width:145px;height:22px;"><div class="v" style="top:4px">总部仓</div></div>
<svg class="a" style="left:470px;top:331px" width="18" height="18" viewBox="0 0 18 18"><path d="M0.600 2.500Q1.500 0 4.500 0.400L5.500 3.500Q4.500 4.500 3.500 4 4 8 8 11.500 8.500 10.300 10 10L12.500 13Q12 15.800 9 16 1 12 0.600 2.500Z" fill="#f6cc1c" stroke="#c89a00" stroke-width="0.700"/><path d="M1.500 2Q2.500 1 4 1.200" stroke="#f07000" stroke-width="1" fill="none"/><path d="M11 15.500Q14 17.300 16.800 15.300" stroke="#666" stroke-width="1" fill="none"/></svg>
<svg class="a" style="left:1048px;top:306px" width="18" height="18" viewBox="0 0 18 18"><path d="M0.600 2.500Q1.500 0 4.500 0.400L5.500 3.500Q4.500 4.500 3.500 4 4 8 8 11.500 8.500 10.300 10 10L12.500 13Q12 15.800 9 16 1 12 0.600 2.500Z" fill="#f6cc1c" stroke="#c89a00" stroke-width="0.700"/><path d="M1.500 2Q2.500 1 4 1.200" stroke="#f07000" stroke-width="1" fill="none"/><path d="M11 15.500Q14 17.300 16.800 15.300" stroke="#666" stroke-width="1" fill="none"/></svg>
<svg class="a" style="left:471px;top:309px" width="17" height="9" viewBox="0 0 17 9"><path d="M0.500 0.500h2v7.500h-2zM3.500 1h5l3-0.500 5 1-4 3h-2.500l-1.500 2.500-2.500 1H3.500z" fill="#e6e2d2"/></svg>
<svg class="a" style="left:1049px;top:335px" width="17" height="9" viewBox="0 0 17 9"><path d="M0.500 0.500h2v7.500h-2zM3.500 1h5l3-0.500 5 1-4 3h-2.500l-1.500 2.500-2.500 1H3.500z" fill="#e6e2d2"/></svg>
<svg class="a" style="left:759px;top:331px" width="17" height="17" viewBox="0 0 17 17"><circle cx="7.500" cy="8" r="6.500" fill="#f4f4f4" stroke="#777" stroke-width="1"/><path d="M6 2.500Q9 0.500 12.500 3L11 4H6.500z" fill="#0000e8"/><path d="M3 9.500h5.500v6Q4 14 3 9.500z" fill="#0000f0"/><path d="M4.500 4h2.500v3.500H5.500z" fill="#008000"/><path d="M2.500 6.500h3v1.500h-3z" fill="#0000e8"/><path d="M8 4.500h5.500l2 2v9.500H8z" fill="#fff" stroke="#b0b0b0" stroke-width="0.800"/><circle cx="11.500" cy="10.500" r="2.600" fill="#0000c8"/><path d="M10 9.500Q11.500 8 13 9L11 11z" fill="#00a050"/><path d="M9 6.500h1M11 6h1M9 14.500h1M11.500 14.500h1M13.500 14h1M9 12h0.800" stroke="#f0e000" stroke-width="1"/></svg>
<div class="a" style="left:212px;top:377px;width:914px;height:306px;background:#fff"></div>
<div class="a" style="left:213px;top:377px;width:813px;height:288px;background:#fff;border-left:1px solid #9cc89c;border-top:1px solid #9cc89c"></div>
<div class="a" style="left:0;top:0;width:1275px;height:642px;overflow:hidden">
<div class="gc" style="left:214px;top:378px;width:49px;height:22px;background:#f8e0ec;text-align:center;color:#000080;padding-top:3px;padding-top:4px;">–</div>
<div class="gc" style="left:263px;top:378px;width:100px;height:22px;background:#e0f0f8;text-align:center;color:#000080;padding-top:3px;padding-top:4px;">产品编号</div>
<div class="gc" style="left:363px;top:378px;width:180px;height:22px;background:#e0f0f8;text-align:center;color:#000080;padding-top:3px;padding-top:4px;">产品名称</div>
<div class="gc" style="left:543px;top:378px;width:40px;height:22px;background:#e0f0f8;text-align:center;color:#000080;padding-top:3px;padding-top:4px;">单位</div>
<div class="gc" style="left:583px;top:378px;width:50px;height:22px;background:#e0f0f8;text-align:center;color:#000080;padding-top:3px;padding-top:4px;">数量</div>
<div class="gc" style="left:633px;top:378px;width:60px;height:22px;background:#e0f0f8;text-align:center;color:#000080;padding-top:3px;padding-top:4px;"></div>
<div class="gc" style="left:693px;top:378px;width:70px;height:22px;background:#e0f0f8;text-align:center;color:#000080;padding-top:3px;padding-top:4px;">金额</div>
<div class="gc" style="left:763px;top:378px;width:50px;height:22px;background:#e0f0f8;text-align:center;color:#000080;padding-top:3px;padding-top:4px;">折扣%</div>
<div class="gc" style="left:813px;top:378px;width:113px;height:22px;background:#e0f0f8;text-align:center;color:#000080;padding-top:3px;padding-top:4px;">合计金额</div>
<div class="gc" style="left:926px;top:378px;width:100px;height:22px;background:#e0f0f8;text-align:center;color:#000080;padding-top:3px;padding-top:4px;">备注</div>
<div class="gc" style="left:214px;top:400px;width:49px;height:23px;background:#e0f0f8;text-align:center;color:#000080;padding-top:4px;">1</div>
<div class="gc" style="left:263px;top:400px;width:100px;height:23px;background:#5865f0;text-align:left;color:#fff;padding:0 4px;padding-top:4px;">I901001</div>
<div class="gc" style="left:363px;top:400px;width:180px;height:23px;background:#d0fcfc;text-align:left;color:#000;padding:0 4px;padding-top:4px;">100面值积分卡</div>
<div class="gc" style="left:543px;top:400px;width:40px;height:23px;background:#d0fcfc;text-align:left;color:#000;padding:0 4px;padding-top:4px;">张</div>
<div class="gc" style="left:583px;top:400px;width:50px;height:23px;background:#d0fcfc;text-align:right;color:#000;padding:0 4px;padding-top:4px;padding-right:4px;">1000</div>
<div class="gc" style="left:633px;top:400px;width:60px;height:23px;background:#d0fcfc;text-align:right;color:#000;padding:0 4px;padding-top:4px;padding-right:4px;">100</div>
<div class="gc" style="left:693px;top:400px;width:70px;height:23px;background:#d0fcfc;text-align:right;color:#000;padding:0 4px;padding-top:4px;padding-right:4px;">100000</div>
<div class="gc" style="left:763px;top:400px;width:50px;height:23px;background:#d0fcfc;text-align:right;color:#000;padding:0 4px;padding-top:4px;padding-right:4px;">12</div>
<div class="gc" style="left:813px;top:400px;width:113px;height:23px;background:#d0fcfc;text-align:right;color:#000;padding:0 4px;padding-top:4px;padding-right:4px;"></div>
<div class="gc" style="left:926px;top:400px;width:100px;height:23px;background:#d0fcfc;text-align:left;color:#000;padding:0 4px;padding-top:4px;"></div>
<div class="gc" style="left:214px;top:423px;width:49px;height:23px;background:#e0f0f8;text-align:center;color:#000080;padding-top:4px;">2</div>
<div class="gc" style="left:263px;top:423px;width:100px;height:23px;background:#fff;text-align:left;color:#000;padding:0 4px;padding-top:4px;"></div>
<div class="gc" style="left:363px;top:423px;width:180px;height:23px;background:#fff;text-align:left;color:#000;padding:0 4px;padding-top:4px;"></div>
<div class="gc" style="left:543px;top:423px;width:40px;height:23px;background:#fff;text-align:left;color:#000;padding:0 4px;padding-top:4px;"></div>
<div class="gc" style="left:583px;top:423px;width:50px;height:23px;background:#fff;text-align:right;color:#000;padding:0 4px;padding-top:4px;padding-right:4px;"></div>
<div class="gc" style="left:633px;top:423px;width:60px;height:23px;background:#fff;text-align:right;color:#000;padding:0 4px;padding-top:4px;padding-right:4px;"></div>
<div class="gc" style="left:693px;top:423px;width:70px;height:23px;background:#fff;text-align:right;color:#000;padding:0 4px;padding-top:4px;padding-right:4px;"></div>
<div class="gc" style="left:763px;top:423px;width:50px;height:23px;background:#fff;text-align:right;color:#000;padding:0 4px;padding-top:4px;padding-right:4px;"></div>
<div class="gc" style="left:813px;top:423px;width:113px;height:23px;background:#fff;text-align:right;color:#000;padding:0 4px;padding-top:4px;padding-right:4px;"></div>
<div class="gc" style="left:926px;top:423px;width:100px;height:23px;background:#fff;text-align:left;color:#000;padding:0 4px;padding-top:4px;"></div>
<div class="gc" style="left:214px;top:446px;width:49px;height:23px;background:#e0f0f8;text-align:center;color:#000080;padding-top:4px;">3</div>
<div class="gc" style="left:263px;top:446px;width:100px;height:23px;background:#f4fcff;text-align:left;color:#000;padding:0 4px;padding-top:4px;"></div>
<div class="gc" style="left:363px;top:446px;width:180px;height:23px;background:#f4fcff;text-align:left;color:#000;padding:0 4px;padding-top:4px;"></div>
<div class="gc" style="left:543px;top:446px;width:40px;height:23px;background:#f4fcff;text-align:left;color:#000;padding:0 4px;padding-top:4px;"></div>
<div class="gc" style="left:583px;top:446px;width:50px;height:23px;background:#f4fcff;text-align:right;color:#000;padding:0 4px;padding-top:4px;padding-right:4px;"></div>
<div class="gc" style="left:633px;top:446px;width:60px;height:23px;background:#f4fcff;text-align:right;color:#000;padding:0 4px;padding-top:4px;padding-right:4px;"></div>
<div class="gc" style="left:693px;top:446px;width:70px;height:23px;background:#f4fcff;text-align:right;color:#000;padding:0 4px;padding-top:4px;padding-right:4px;"></div>
<div class="gc" style="left:763px;top:446px;width:50px;height:23px;background:#f4fcff;text-align:right;color:#000;padding:0 4px;padding-top:4px;padding-right:4px;"></div>
<div class="gc" style="left:813px;top:446px;width:113px;height:23px;background:#f4fcff;text-align:right;color:#000;padding:0 4px;padding-top:4px;padding-right:4px;"></div>
<div class="gc" style="left:926px;top:446px;width:100px;height:23px;background:#f4fcff;text-align:left;color:#000;padding:0 4px;padding-top:4px;"></div>
<div class="gc" style="left:214px;top:469px;width:49px;height:23px;background:#e0f0f8;text-align:center;color:#000080;padding-top:4px;">4</div>
<div class="gc" style="left:263px;top:469px;width:100px;height:23px;background:#fff;text-align:left;color:#000;padding:0 4px;padding-top:4px;"></div>
<div class="gc" style="left:363px;top:469px;width:180px;height:23px;background:#fff;text-align:left;color:#000;padding:0 4px;padding-top:4px;"></div>
<div class="gc" style="left:543px;top:469px;width:40px;height:23px;background:#fff;text-align:left;color:#000;padding:0 4px;padding-top:4px;"></div>
<div class="gc" style="left:583px;top:469px;width:50px;height:23px;background:#fff;text-align:right;color:#000;padding:0 4px;padding-top:4px;padding-right:4px;"></div>
<div class="gc" style="left:633px;top:469px;width:60px;height:23px;background:#fff;text-align:right;color:#000;padding:0 4px;padding-top:4px;padding-right:4px;"></div>
<div class="gc" style="left:693px;top:469px;width:70px;height:23px;background:#fff;text-align:right;color:#000;padding:0 4px;padding-top:4px;padding-right:4px;"></div>
<div class="gc" style="left:763px;top:469px;width:50px;height:23px;background:#fff;text-align:right;color:#000;padding:0 4px;padding-top:4px;padding-right:4px;"></div>
<div class="gc" style="left:813px;top:469px;width:113px;height:23px;background:#fff;text-align:right;color:#000;padding:0 4px;padding-top:4px;padding-right:4px;"></div>
<div class="gc" style="left:926px;top:469px;width:100px;height:23px;background:#fff;text-align:left;color:#000;padding:0 4px;padding-top:4px;"></div>
<div class="gc" style="left:214px;top:492px;width:49px;height:23px;background:#e0f0f8;text-align:center;color:#000080;padding-top:4px;">5</div>
<div class="gc" style="left:263px;top:492px;width:100px;height:23px;background:#f4fcff;text-align:left;color:#000;padding:0 4px;padding-top:4px;"></div>
<div class="gc" style="left:363px;top:492px;width:180px;height:23px;background:#f4fcff;text-align:left;color:#000;padding:0 4px;padding-top:4px;"></div>
<div class="gc" style="left:543px;top:492px;width:40px;height:23px;background:#f4fcff;text-align:left;color:#000;padding:0 4px;padding-top:4px;"></div>
<div class="gc" style="left:583px;top:492px;width:50px;height:23px;background:#f4fcff;text-align:right;color:#000;padding:0 4px;padding-top:4px;padding-right:4px;"></div>
<div class="gc" style="left:633px;top:492px;width:60px;height:23px;background:#f4fcff;text-align:right;color:#000;padding:0 4px;padding-top:4px;padding-right:4px;"></div>
<div class="gc" style="left:693px;top:492px;width:70px;height:23px;background:#f4fcff;text-align:right;color:#000;padding:0 4px;padding-top:4px;padding-right:4px;"></div>
<div class="gc" style="left:763px;top:492px;width:50px;height:23px;background:#f4fcff;text-align:right;color:#000;padding:0 4px;padding-top:4px;padding-right:4px;"></div>
<div class="gc" style="left:813px;top:492px;width:113px;height:23px;background:#f4fcff;text-align:right;color:#000;padding:0 4px;padding-top:4px;padding-right:4px;"></div>
<div class="gc" style="left:926px;top:492px;width:100px;height:23px;background:#f4fcff;text-align:left;color:#000;padding:0 4px;padding-top:4px;"></div>
<div class="gc" style="left:214px;top:515px;width:49px;height:23px;background:#e0f0f8;text-align:center;color:#000080;padding-top:4px;">6</div>
<div class="gc" style="left:263px;top:515px;width:100px;height:23px;background:#fff;text-align:left;color:#000;padding:0 4px;padding-top:4px;"></div>
<div class="gc" style="left:363px;top:515px;width:180px;height:23px;background:#fff;text-align:left;color:#000;padding:0 4px;padding-top:4px;"></div>
<div class="gc" style="left:543px;top:515px;width:40px;height:23px;background:#fff;text-align:left;color:#000;padding:0 4px;padding-top:4px;"></div>
<div class="gc" style="left:583px;top:515px;width:50px;height:23px;background:#fff;text-align:right;color:#000;padding:0 4px;padding-top:4px;padding-right:4px;"></div>
<div class="gc" style="left:633px;top:515px;width:60px;height:23px;background:#fff;text-align:right;color:#000;padding:0 4px;padding-top:4px;padding-right:4px;"></div>
<div class="gc" style="left:693px;top:515px;width:70px;height:23px;background:#fff;text-align:right;color:#000;padding:0 4px;padding-top:4px;padding-right:4px;"></div>
<div class="gc" style="left:763px;top:515px;width:50px;height:23px;background:#fff;text-align:right;color:#000;padding:0 4px;padding-top:4px;padding-right:4px;"></div>
<div class="gc" style="left:813px;top:515px;width:113px;height:23px;background:#fff;text-align:right;color:#000;padding:0 4px;padding-top:4px;padding-right:4px;"></div>
<div class="gc" style="left:926px;top:515px;width:100px;height:23px;background:#fff;text-align:left;color:#000;padding:0 4px;padding-top:4px;"></div>
<div class="gc" style="left:214px;top:538px;width:49px;height:23px;background:#e0f0f8;text-align:center;color:#000080;padding-top:4px;">7</div>
<div class="gc" style="left:263px;top:538px;width:100px;height:23px;background:#f4fcff;text-align:left;color:#000;padding:0 4px;padding-top:4px;"></div>
<div class="gc" style="left:363px;top:538px;width:180px;height:23px;background:#f4fcff;text-align:left;color:#000;padding:0 4px;padding-top:4px;"></div>
<div class="gc" style="left:543px;top:538px;width:40px;height:23px;background:#f4fcff;text-align:left;color:#000;padding:0 4px;padding-top:4px;"></div>
<div class="gc" style="left:583px;top:538px;width:50px;height:23px;background:#f4fcff;text-align:right;color:#000;padding:0 4px;padding-top:4px;padding-right:4px;"></div>
<div class="gc" style="left:633px;top:538px;width:60px;height:23px;background:#f4fcff;text-align:right;color:#000;padding:0 4px;padding-top:4px;padding-right:4px;"></div>
<div class="gc" style="left:693px;top:538px;width:70px;height:23px;background:#f4fcff;text-align:right;color:#000;padding:0 4px;padding-top:4px;padding-right:4px;"></div>
<div class="gc" style="left:763px;top:538px;width:50px;height:23px;background:#f4fcff;text-align:right;color:#000;padding:0 4px;padding-top:4px;padding-right:4px;"></div>
<div class="gc" style="left:813px;top:538px;width:113px;height:23px;background:#f4fcff;text-align:right;color:#000;padding:0 4px;padding-top:4px;padding-right:4px;"></div>
<div class="gc" style="left:926px;top:538px;width:100px;height:23px;background:#f4fcff;text-align:left;color:#000;padding:0 4px;padding-top:4px;"></div>
<div class="gc" style="left:214px;top:561px;width:49px;height:23px;background:#e0f0f8;text-align:center;color:#000080;padding-top:4px;">8</div>
<div class="gc" style="left:263px;top:561px;width:100px;height:23px;background:#fff;text-align:left;color:#000;padding:0 4px;padding-top:4px;"></div>
<div class="gc" style="left:363px;top:561px;width:180px;height:23px;background:#fff;text-align:left;color:#000;padding:0 4px;padding-top:4px;"></div>
<div class="gc" style="left:543px;top:561px;width:40px;height:23px;background:#fff;text-align:left;color:#000;padding:0 4px;padding-top:4px;"></div>
<div class="gc" style="left:583px;top:561px;width:50px;height:23px;background:#fff;text-align:right;color:#000;padding:0 4px;padding-top:4px;padding-right:4px;"></div>
<div class="gc" style="left:633px;top:561px;width:60px;height:23px;background:#fff;text-align:right;color:#000;padding:0 4px;padding-top:4px;padding-right:4px;"></div>
<div class="gc" style="left:693px;top:561px;width:70px;height:23px;background:#fff;text-align:right;color:#000;padding:0 4px;padding-top:4px;padding-right:4px;"></div>
<div class="gc" style="left:763px;top:561px;width:50px;height:23px;background:#fff;text-align:right;color:#000;padding:0 4px;padding-top:4px;padding-right:4px;"></div>
<div class="gc" style="left:813px;top:561px;width:113px;height:23px;background:#fff;text-align:right;color:#000;padding:0 4px;padding-top:4px;padding-right:4px;"></div>
<div class="gc" style="left:926px;top:561px;width:100px;height:23px;background:#fff;text-align:left;color:#000;padding:0 4px;padding-top:4px;"></div>
<div class="gc" style="left:214px;top:584px;width:49px;height:23px;background:#e0f0f8;text-align:center;color:#000080;padding-top:4px;">9</div>
<div class="gc" style="left:263px;top:584px;width:100px;height:23px;background:#f4fcff;text-align:left;color:#000;padding:0 4px;padding-top:4px;"></div>
<div class="gc" style="left:363px;top:584px;width:180px;height:23px;background:#f4fcff;text-align:left;color:#000;padding:0 4px;padding-top:4px;"></div>
<div class="gc" style="left:543px;top:584px;width:40px;height:23px;background:#f4fcff;text-align:left;color:#000;padding:0 4px;padding-top:4px;"></div>
<div class="gc" style="left:583px;top:584px;width:50px;height:23px;background:#f4fcff;text-align:right;color:#000;padding:0 4px;padding-top:4px;padding-right:4px;"></div>
<div class="gc" style="left:633px;top:584px;width:60px;height:23px;background:#f4fcff;text-align:right;color:#000;padding:0 4px;padding-top:4px;padding-right:4px;"></div>
<div class="gc" style="left:693px;top:584px;width:70px;height:23px;background:#f4fcff;text-align:right;color:#000;padding:0 4px;padding-top:4px;padding-right:4px;"></div>
<div class="gc" style="left:763px;top:584px;width:50px;height:23px;background:#f4fcff;text-align:right;color:#000;padding:0 4px;padding-top:4px;padding-right:4px;"></div>
<div class="gc" style="left:813px;top:584px;width:113px;height:23px;background:#f4fcff;text-align:right;color:#000;padding:0 4px;padding-top:4px;padding-right:4px;"></div>
<div class="gc" style="left:926px;top:584px;width:100px;height:23px;background:#f4fcff;text-align:left;color:#000;padding:0 4px;padding-top:4px;"></div>
<div class="gc" style="left:214px;top:607px;width:49px;height:23px;background:#e0f0f8;text-align:center;color:#000080;padding-top:4px;">10</div>
<div class="gc" style="left:263px;top:607px;width:100px;height:23px;background:#fff;text-align:left;color:#000;padding:0 4px;padding-top:4px;"></div>
<div class="gc" style="left:363px;top:607px;width:180px;height:23px;background:#fff;text-align:left;color:#000;padding:0 4px;padding-top:4px;"></div>
<div class="gc" style="left:543px;top:607px;width:40px;height:23px;background:#fff;text-align:left;color:#000;padding:0 4px;padding-top:4px;"></div>
<div class="gc" style="left:583px;top:607px;width:50px;height:23px;background:#fff;text-align:right;color:#000;padding:0 4px;padding-top:4px;padding-right:4px;"></div>
<div class="gc" style="left:633px;top:607px;width:60px;height:23px;background:#fff;text-align:right;color:#000;padding:0 4px;padding-top:4px;padding-right:4px;"></div>
<div class="gc" style="left:693px;top:607px;width:70px;height:23px;background:#fff;text-align:right;color:#000;padding:0 4px;padding-top:4px;padding-right:4px;"></div>
<div class="gc" style="left:763px;top:607px;width:50px;height:23px;background:#fff;text-align:right;color:#000;padding:0 4px;padding-top:4px;padding-right:4px;"></div>
<div class="gc" style="left:813px;top:607px;width:113px;height:23px;background:#fff;text-align:right;color:#000;padding:0 4px;padding-top:4px;padding-right:4px;"></div>
<div class="gc" style="left:926px;top:607px;width:100px;height:23px;background:#fff;text-align:left;color:#000;padding:0 4px;padding-top:4px;"></div>
<div class="gc" style="left:214px;top:630px;width:49px;height:23px;background:#e0f0f8;text-align:center;color:#000080;padding-top:4px;">11</div>
<div class="gc" style="left:263px;top:630px;width:100px;height:23px;background:#f4fcff;text-align:left;color:#000;padding:0 4px;padding-top:4px;"></div>
<div class="gc" style="left:363px;top:630px;width:180px;height:23px;background:#f4fcff;text-align:left;color:#000;padding:0 4px;padding-top:4px;"></div>
<div class="gc" style="left:543px;top:630px;width:40px;height:23px;background:#f4fcff;text-align:left;color:#000;padding:0 4px;padding-top:4px;"></div>
<div class="gc" style="left:583px;top:630px;width:50px;height:23px;background:#f4fcff;text-align:right;color:#000;padding:0 4px;padding-top:4px;padding-right:4px;"></div>
<div class="gc" style="left:633px;top:630px;width:60px;height:23px;background:#f4fcff;text-align:right;color:#000;padding:0 4px;padding-top:4px;padding-right:4px;"></div>
<div class="gc" style="left:693px;top:630px;width:70px;height:23px;background:#f4fcff;text-align:right;color:#000;padding:0 4px;padding-top:4px;padding-right:4px;"></div>
<div class="gc" style="left:763px;top:630px;width:50px;height:23px;background:#f4fcff;text-align:right;color:#000;padding:0 4px;padding-top:4px;padding-right:4px;"></div>
<div class="gc" style="left:813px;top:630px;width:113px;height:23px;background:#f4fcff;text-align:right;color:#000;padding:0 4px;padding-top:4px;padding-right:4px;"></div>
<div class="gc" style="left:926px;top:630px;width:100px;height:23px;background:#f4fcff;text-align:left;color:#000;padding:0 4px;padding-top:4px;"></div>
</div>
<div class="gc" style="left:214px;top:642px;width:49px;height:23px;background:#f8e0ec;text-align:right;color:#000;padding:0 4px;padding-top:4px;padding-right:4px;border-top:1px solid #9cc89c;"></div>
<div class="gc" style="left:263px;top:642px;width:100px;height:23px;background:#fff;text-align:left;color:#000;padding:0 4px;padding-top:4px;padding-right:4px;border-top:1px solid #9cc89c;">合计 1</div>
<div class="gc" style="left:363px;top:642px;width:180px;height:23px;background:#fff;text-align:right;color:#000;padding:0 4px;padding-top:4px;padding-right:4px;border-top:1px solid #9cc89c;"></div>
<div class="gc" style="left:543px;top:642px;width:40px;height:23px;background:#fff;text-align:right;color:#000;padding:0 4px;padding-top:4px;padding-right:4px;border-top:1px solid #9cc89c;"></div>
<div class="gc" style="left:583px;top:642px;width:50px;height:23px;background:#fff;text-align:right;color:#000;padding:0 4px;padding-top:4px;padding-right:4px;border-top:1px solid #9cc89c;">1000</div>
<div class="gc" style="left:633px;top:642px;width:60px;height:23px;background:#fff;text-align:right;color:#000;padding:0 4px;padding-top:4px;padding-right:4px;border-top:1px solid #9cc89c;"></div>
<div class="gc" style="left:693px;top:642px;width:70px;height:23px;background:#fff;text-align:right;color:#000;padding:0 4px;padding-top:4px;padding-right:4px;border-top:1px solid #9cc89c;">100000</div>
<div class="gc" style="left:763px;top:642px;width:50px;height:23px;background:#fff;text-align:right;color:#000;padding:0 4px;padding-top:4px;padding-right:4px;border-top:1px solid #9cc89c;"></div>
<div class="gc" style="left:813px;top:642px;width:113px;height:23px;background:#fff;text-align:right;color:#000;padding:0 4px;padding-top:4px;padding-right:4px;border-top:1px solid #9cc89c;"></div>
<div class="gc" style="left:926px;top:642px;width:100px;height:23px;background:#fff;text-align:right;color:#000;padding:0 4px;padding-top:4px;padding-right:4px;border-top:1px solid #9cc89c;"></div>
<div class="a" style="left:823px;top:400px;width:1px;height:264px;background:#606060"></div>
<div class="a" style="left:833px;top:400px;width:1px;height:264px;background:#606060"></div>
<div class="a" style="left:843px;top:400px;width:1px;height:264px;background:#000"></div>
<div class="a" style="left:853px;top:400px;width:1px;height:264px;background:#606060"></div>
<div class="a" style="left:863px;top:400px;width:1px;height:264px;background:#606060"></div>
<div class="a" style="left:873px;top:400px;width:1px;height:264px;background:#000"></div>
<div class="a" style="left:883px;top:400px;width:1px;height:264px;background:#606060"></div>
<div class="a" style="left:893px;top:400px;width:1px;height:264px;background:#606060"></div>
<div class="a" style="left:903px;top:400px;width:1px;height:264px;background:#f00000"></div>
<div class="a" style="left:913px;top:400px;width:1px;height:264px;background:#606060"></div>
<div class="t" style="left:854px;top:404px;width:9px;text-align:center;color:#0000e0;font-weight:bold">1</div>
<div class="t" style="left:864px;top:404px;width:9px;text-align:center;color:#000;font-weight:normal">2</div>
<div class="t" style="left:874px;top:404px;width:9px;text-align:center;color:#000;font-weight:normal">0</div>
<div class="t" style="left:884px;top:404px;width:9px;text-align:center;color:#000;font-weight:normal">0</div>
<div class="t" style="left:894px;top:404px;width:9px;text-align:center;color:#000;font-weight:normal">0</div>
<div class="t" style="left:904px;top:404px;width:9px;text-align:center;color:#f00000;font-weight:normal">0</div>
<div class="t" style="left:914px;top:404px;width:9px;text-align:center;color:#f00000;font-weight:normal">0</div>
<div class="t" style="left:854px;top:647px;width:9px;text-align:center;color:#0000e0;font-weight:bold">1</div>
<div class="t" style="left:864px;top:647px;width:9px;text-align:center;color:#000;font-weight:normal">2</div>
<div class="t" style="left:874px;top:647px;width:9px;text-align:center;color:#000;font-weight:normal">0</div>
<div class="t" style="left:884px;top:647px;width:9px;text-align:center;color:#000;font-weight:normal">0</div>
<div class="t" style="left:894px;top:647px;width:9px;text-align:center;color:#000;font-weight:normal">0</div>
<div class="t" style="left:904px;top:647px;width:9px;text-align:center;color:#f00000;font-weight:normal">0</div>
<div class="t" style="left:914px;top:647px;width:9px;text-align:center;color:#f00000;font-weight:normal">0</div>
<svg class="a" style="left:680px;top:405px" width="320" height="65" viewBox="680 405 320 65"><path d="M727.700 423.200L710.500 428.500 713.300 431 686.500 461.500 718.500 436.500 721 439.500z" fill="#fb3232"/><path d="M925 411.500L943 409 941.500 414 984 431 939.500 419.500 938 424z" fill="#fb3232"/></svg>
<div class="a" style="left:1109px;top:378px;width:15px;height:264px;background:linear-gradient(90deg,#e8ecfa,#f6f7fe 40%,#fbfbff)"></div>
<div class="sbb" style="left:1109px;top:378px;width:15px;height:16px;"></div>
<svg class="a" style="left:1112px;top:381px" width="9" height="9" viewBox="0 0 9 9"><path d="M1 5.500l3.500-3.500 3.500 3.500" fill="none" stroke="#4d6185" stroke-width="2"/></svg>
<div class="sbb" style="left:1109px;top:626px;width:15px;height:16px;"></div>
<svg class="a" style="left:1112px;top:630px" width="9" height="9" viewBox="0 0 9 9"><path d="M1 1.500l3.500 3.500 3.500-3.500" fill="none" stroke="#4d6185" stroke-width="2"/></svg>
<div class="sbb" style="left:1109px;top:395px;width:15px;height:16px;"></div>
<div class="a" style="left:1113px;top:399px;width:7px;height:1px;background:#8aa0d8"></div>
<div class="a" style="left:1113px;top:401px;width:7px;height:1px;background:#8aa0d8"></div>
<div class="a" style="left:1113px;top:403px;width:7px;height:1px;background:#8aa0d8"></div>
<div class="a" style="left:1113px;top:405px;width:7px;height:1px;background:#8aa0d8"></div>
<div class="a" style="left:212px;top:683px;width:914px;height:54px;background:#fffbf0"></div>
<div class="t" style="left:221px;top:693px;">业务部门</div>
<div class="inp" style="left:280px;top:687px;width:105px;height:22px;"><div class="v" style="top:4px">仓库</div></div>
<div class="t" style="left:392px;top:693px;">业务员</div>
<div class="inp" style="left:437px;top:687px;width:87px;height:22px;"><div class="v" style="top:4px">谢海勤</div></div>
<div class="t" style="left:531px;top:696px;color:#a0a0a0">...</div>
<div class="t" style="left:562px;top:693px;">制单人</div>
<div class="t" style="left:630px;top:693px;color:#ff0000">谢海勤</div>
<div class="t" style="left:700px;top:692px;color:#2a8a9a">2016-05-23</div>
<div class="t" style="left:782px;top:693px;">审核员</div>
<div class="t" style="left:843px;top:693px;color:#ff0000">谢海勤</div>
<div class="t" style="left:911px;top:692px;color:#2a8a9a">2016-05-23</div>
<div class="t" style="left:221px;top:718px;">备</div>
<div class="t" style="left:257px;top:718px;">注</div>
<div class="inp" style="left:280px;top:713px;width:693px;height:21px;"><div class="v" style=""></div></div>
<div class="a" style="left:956px;top:715px;width:15px;height:9px;background:#f0f0ec;border:1px solid #d0d0c8"></div>
<div class="a" style="left:956px;top:724px;width:15px;height:9px;background:#f0f0ec;border:1px solid #d0d0c8"></div>
<div class="a" style="left:212px;top:737px;width:914px;height:27px;background:#ececfb"></div>
<svg class="a" style="left:221px;top:740px" width="15" height="18" viewBox="0 0 15 18"><path d="M1.500 1.500h8l4 4v11h-12z" fill="#fff" stroke="#000"/><path d="M9.500 1.500v4h4" fill="none" stroke="#000"/><path d="M9.500 7.500A3 3.200 0 0 0 4.500 9v1.500" fill="none" stroke="#009000" stroke-width="1.300"/><path d="M2.800 9.800h3.600l-1.800 2.400z" fill="#009000"/><path d="M5.500 14A3 3.200 0 0 0 10.500 12.500v-1.500" fill="none" stroke="#009000" stroke-width="1.300"/><path d="M8.700 11.600h3.600l-1.800-2.400z" fill="#009000"/></svg>
<div class="t" style="left:242px;top:744px;color:#0000e0">业务信息</div>
<div class="t" style="left:297px;top:744px;color:#008000">库存-~</div>
<div class="t" style="left:362px;top:744px;">销售量++</div>
<div class="t" style="left:420px;top:744px;color:#008000">应收账+</div>
<div class="t" style="left:549px;top:744px;">虚拟库影响</div>
<div class="a" style="left:666px;top:742px;width:54px;height:16px;background:#aac4f0"></div>
<div class="t" style="left:674px;top:744px;color:#f00000">创建=></div>
<div class="t" style="left:720px;top:744px;color:#f00000">出库单</div>
<div class="t" style="left:768px;top:744px;color:#f00000">可引用</div>
<div class="a" style="left:1100px;top:221px;width:190px;height:60px;background:linear-gradient(115deg,rgba(255,255,255,0) 55%,rgba(255,255,255,0.07) 56%,rgba(255,255,255,0.07) 72%,rgba(255,255,255,0) 73%),rgba(58,63,68,0.86);border-radius:6px;border:1px solid rgba(40,44,48,0.9)"></div>
<div class="a" style="left:1100px;top:285px;width:190px;height:24px;background:rgba(80,86,92,0.78);border-radius:0 0 0 6px;border:1px solid rgba(50,54,58,0.85)"></div>
<div class="t" style="left:1100px;top:204px;color:#fff;font-size:12px;text-shadow:1px 1px 1px #444,-1px -1px 1px #666,0 0 2px #333">360 U盘小助手</div>
<div class="t" style="left:1249px;top:204px;color:#fff;text-shadow:1px 1px 1px #333,0 0 2px #333">☰设</div>
<svg class="a" style="left:1112px;top:235px" width="30" height="30" viewBox="0 0 30 30"><path d="M4 2h22l3 17H1z" fill="#8cc820"/><path d="M4 2h22l1 6H3z" fill="#a6dc3c"/><path d="M1 19h28v7l-2 3H3l-2-3z" fill="#4a4e52"/><path d="M9 24h8" stroke="#222" stroke-width="1.500" stroke-dasharray="1 1"/><path d="M20 24h5" stroke="#7cff00" stroke-width="1.500" stroke-dasharray="1 1"/></svg>
<div class="t" style="left:1116px;top:240px;color:#fff;font-size:11px;font-weight:bold">安全</div>
<div class="a" style="left:1152px;top:233px;width:1px;height:44px;background-image:linear-gradient(#222 50%,transparent 50%);background-size:1px 4px;width:2px"></div>
<div class="t" style="left:1164px;top:233px;color:#fff;font-family:'Liberation Mono',monospace;font-size:11px;letter-spacing:-0.6px">Expansion Drive(G:)</div>
<div class="t" style="left:1164px;top:253px;color:#fff;font-size:12px">剩余空间：<span style="font-family:'Liberation Mono',monospace;font-size:12px;letter-spacing:-1.2px">422.6GB</span></div>
<div class="a" style="left:1102px;top:277px;width:17px;height:2px;background:#50d000"></div>
<div class="t" style="left:1127px;top:290px;color:#d4d8dc">查杀</div>
<div class="t" style="left:1184px;top:290px;color:#d4d8dc">鉴定</div>
<div class="t" style="left:1243px;top:290px;color:#d4d8dc">恢复</div>
<svg class="a" style="left:1113px;top:289px" width="12" height="15" viewBox="0 0 12 15"><path d="M3 0.500h8L7.500 5.500h3.500L2 14.500l2.500-7H1z" fill="#d4d8dc"/></svg>
<svg class="a" style="left:1170px;top:290px" width="10" height="13" viewBox="0 0 10 13"><path d="M1.500 0h7v5h-7zM0 5h10v7.500h-10z" fill="#d4d8dc"/><path d="M3 1.500h1.500v2H3zM5.500 1.500H7v2H5.500z" fill="#62686e"/></svg>
<svg class="a" style="left:1226px;top:290px" width="13" height="12" viewBox="0 0 13 12"><path d="M1 5a5 4 0 1 1 6 4l0 2-4-3 4-3v2a3 2 0 1 0-4-2z" fill="#d4d8dc"/></svg>
<div class="a" style="left:1239px;top:702px;width:48px;height:48px;border-radius:50%;border:1px solid #a8a8a8;background:linear-gradient(#fafafa,#c4c4c4);box-shadow:0 1px 3px rgba(0,0,0,0.45)"></div>
<div class="a" style="left:1242px;top:705px;width:42px;height:42px;border-radius:50%;background:linear-gradient(#0b6038 0,#0f6f42 30%,#178048 74%,#3cb85a 76%,#40c060 100%);overflow:hidden"></div>
<div class="t" style="left:1249px;top:717px;color:#fff;font-size:14px;line-height:16px;height:16px">32%</div>
</body></html>
